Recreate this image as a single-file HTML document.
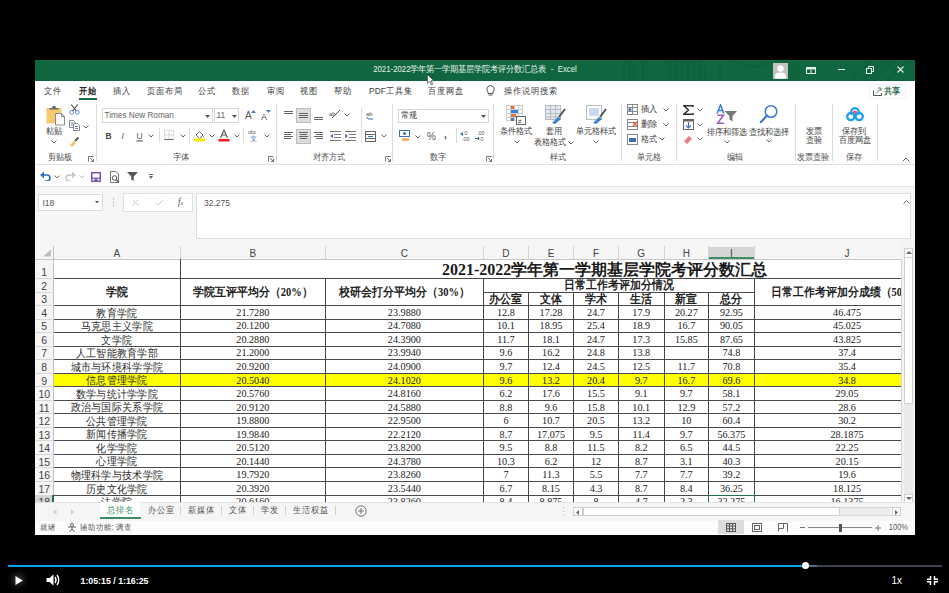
<!DOCTYPE html><html><head><meta charset="utf-8"><style>
html,body{margin:0;padding:0;}
body{width:949px;height:593px;background:#000;position:relative;overflow:hidden;font-family:"Liberation Sans",sans-serif;}
.t{transform:scaleY(1.1);transform-origin:50% 50%;}
</style></head><body>
<div style="position:absolute;left:35px;top:60px;width:880px;height:475px;background:#fff;"></div>
<div style="position:absolute;left:35px;top:60px;width:880px;height:21px;background:#10663f;"></div>
<svg style="position:absolute;left:610px;top:60px;" width="305" height="21" viewBox="0 0 305 21"><g opacity="0.35" fill="none" stroke="#0c5a33" stroke-width="2"><path d="M14 0 V21 M19 0 V21 M24 4 V21 M33 0 V21 M60 0 V21 M66 0 V21 M72 0 V21 M78 2 V21 M84 0 V21 M90 0 V21 M95 5 V21 M110 0 V21"/><circle cx="182" cy="12" r="7"/><circle cx="182" cy="12" r="3"/><path d="M125 0 Q140 12 160 2" /><path d="M240 21 L262 0 M252 21 L274 0 M264 21 L286 0 M276 21 L298 0"/></g></svg>
<div class="t" style="position:absolute;left:35px;top:65.5px;width:880px;text-align:center;font:7.8px/7.8px 'Liberation Sans', sans-serif;color:#e8f0ea;white-space:nowrap;">2021-2022学年第一学期基层学院考评分数汇总表&nbsp; -&nbsp; Excel</div>
<div class="t" style="position:absolute;left:44px;top:86.5px;font:8.5px/8.5px 'Liberation Sans', sans-serif;color:#444;white-space:nowrap;">文件</div>
<div class="t" style="position:absolute;left:79px;top:86.5px;font:8.5px/8.5px 'Liberation Sans', sans-serif;color:#222;white-space:nowrap;font-weight:bold;">开始</div>
<div class="t" style="position:absolute;left:113px;top:86.5px;font:8.5px/8.5px 'Liberation Sans', sans-serif;color:#444;white-space:nowrap;">插入</div>
<div class="t" style="position:absolute;left:147px;top:86.5px;font:8.5px/8.5px 'Liberation Sans', sans-serif;color:#444;white-space:nowrap;">页面布局</div>
<div class="t" style="position:absolute;left:197.5px;top:86.5px;font:8.5px/8.5px 'Liberation Sans', sans-serif;color:#444;white-space:nowrap;">公式</div>
<div class="t" style="position:absolute;left:232px;top:86.5px;font:8.5px/8.5px 'Liberation Sans', sans-serif;color:#444;white-space:nowrap;">数据</div>
<div class="t" style="position:absolute;left:266.5px;top:86.5px;font:8.5px/8.5px 'Liberation Sans', sans-serif;color:#444;white-space:nowrap;">审阅</div>
<div class="t" style="position:absolute;left:300px;top:86.5px;font:8.5px/8.5px 'Liberation Sans', sans-serif;color:#444;white-space:nowrap;">视图</div>
<div class="t" style="position:absolute;left:334px;top:86.5px;font:8.5px/8.5px 'Liberation Sans', sans-serif;color:#444;white-space:nowrap;">帮助</div>
<div class="t" style="position:absolute;left:369px;top:86.5px;font:8.5px/8.5px 'Liberation Sans', sans-serif;color:#444;white-space:nowrap;">PDF工具集</div>
<div class="t" style="position:absolute;left:428px;top:86.5px;font:8.5px/8.5px 'Liberation Sans', sans-serif;color:#444;white-space:nowrap;">百度网盘</div>
<div class="t" style="position:absolute;left:504px;top:86.5px;font:8.5px/8.5px 'Liberation Sans', sans-serif;color:#444;white-space:nowrap;">操作说明搜索</div>
<div style="position:absolute;left:79px;top:97.5px;width:17.5px;height:2px;background:#1d6b45;"></div>
<div style="position:absolute;left:35px;top:164px;width:880px;height:1px;background:#e1e1e1;"></div>
<div style="position:absolute;left:35px;top:187px;width:880px;height:59px;background:#f6f6f6;"></div>
<div style="position:absolute;left:35px;top:186px;width:880px;height:1px;background:#e6e6e6;"></div>
<svg style="position:absolute;left:45.5px;top:105px;" width="20" height="21" viewBox="0 0 20 21"><rect x="0.5" y="3" width="15" height="15.5" fill="#f7c96e"/><path d="M3.5 4.5 V3 H6 Q6 0.8 8 0.8 Q10 0.8 10 3 H12.5 V4.5 Z" fill="#6b6b6b"/><path d="M9.5 8.5 H15.5 L18.5 11.5 V20 H9.5 Z" fill="#fff" stroke="#8a8a8a" stroke-width="1"/><path d="M15.5 8.5 V11.5 H18.5" fill="none" stroke="#8a8a8a" stroke-width="1"/></svg>
<div class="t" style="position:absolute;left:46px;top:128px;font:8px/8px 'Liberation Sans', sans-serif;color:#444;white-space:nowrap;">粘贴</div>
<svg style="position:absolute;left:51px;top:140px;" width="6" height="4" viewBox="0 0 6 4"><path d="M0.5 0.5 L3 3 L5.5 0.5" fill="none" stroke="#666" stroke-width="1"/></svg>
<svg style="position:absolute;left:69px;top:104px;" width="11" height="11" viewBox="0 0 11 11"><circle cx="2.7" cy="8.3" r="1.9" fill="none" stroke="#5a86c8" stroke-width="1"/><circle cx="8.3" cy="8.3" r="1.9" fill="none" stroke="#5a86c8" stroke-width="1"/><path d="M3.8 6.6 L8.8 0.5 M7.2 6.6 L2.2 0.5" stroke="#555" stroke-width="1.1"/></svg>
<svg style="position:absolute;left:69px;top:120px;" width="11" height="11" viewBox="0 0 11 11"><path d="M0.5 0.5 H4.5 L6 2 V7.5 H0.5 Z" fill="#fff" stroke="#8a8a8a"/><path d="M4.5 3.5 H8.5 L10.5 5.5 V10.5 H4.5 Z" fill="#fff" stroke="#8a8a8a"/><path d="M2 3 H4 M2 5 H4 M6 6.5 H9 M6 8.5 H9" stroke="#5b8fd0"/></svg>
<svg style="position:absolute;left:83px;top:125px;" width="6" height="4" viewBox="0 0 6 4"><path d="M0.5 0.5 L3 3 L5.5 0.5" fill="none" stroke="#666" stroke-width="1"/></svg>
<svg style="position:absolute;left:69px;top:136px;" width="11" height="11" viewBox="0 0 11 11"><path d="M1 9 L5 5 L7 7 L3 11 Z" fill="#f2c26b"/><path d="M6 5 L9.5 1.5" stroke="#555" stroke-width="2"/></svg>
<div class="t" style="position:absolute;left:48px;top:154px;font:8px/8px 'Liberation Sans', sans-serif;color:#505050;white-space:nowrap;">剪贴板</div>
<svg style="position:absolute;left:88px;top:155.5px;" width="6" height="6" viewBox="0 0 6 6"><path d="M0.5 5.5 V0.5 H5.5" fill="none" stroke="#777" stroke-width="1"/><path d="M2 2 L5.5 5.5 M5.5 3 V5.5 H3" fill="none" stroke="#777" stroke-width="1"/></svg>
<div style="position:absolute;left:96.4px;top:104px;width:1px;height:57px;background:#dcdcdc;"></div>
<div style="position:absolute;left:102px;top:108.2px;width:110.5px;height:14.8px;border:1px solid #d6d6d6;box-sizing:border-box;background:#fff;"></div>
<div class="t" style="position:absolute;left:104.5px;top:111px;font:8.2px/9px 'Liberation Sans', sans-serif;color:#666;white-space:nowrap;">Times New Roman</div>
<svg style="position:absolute;left:205px;top:114.5px;" width="5" height="3" viewBox="0 0 5 3"><path d="M0 0 L5 0 L2.5 3 Z" fill="#555"/></svg>
<div style="position:absolute;left:214.3px;top:108.2px;width:25px;height:14.8px;border:1px solid #d6d6d6;box-sizing:border-box;background:#fff;"></div>
<div class="t" style="position:absolute;left:216.5px;top:111px;font:8.5px/9px 'Liberation Sans', sans-serif;color:#666;white-space:nowrap;">11</div>
<svg style="position:absolute;left:232px;top:114.5px;" width="5" height="3" viewBox="0 0 5 3"><path d="M0 0 L5 0 L2.5 3 Z" fill="#555"/></svg>
<div class="t" style="position:absolute;left:245px;top:111px;font:10px/10px 'Liberation Sans', sans-serif;color:#555;white-space:nowrap;">A</div>
<svg style="position:absolute;left:250.5px;top:110px;" width="5" height="3" viewBox="0 0 5 3"><path d="M0 3 L2.5 0 L5 3 Z" fill="#4a7fc1"/></svg>
<div class="t" style="position:absolute;left:261px;top:112px;font:9px/10px 'Liberation Sans', sans-serif;color:#555;white-space:nowrap;">A</div>
<svg style="position:absolute;left:266px;top:110px;" width="5" height="3" viewBox="0 0 5 3"><path d="M0 0 L5 0 L2.5 3 Z" fill="#4a7fc1"/></svg>
<div class="t" style="position:absolute;left:105.5px;top:131.5px;font:8.5px/9px 'Liberation Sans', sans-serif;color:#444;white-space:nowrap;"><b>B</b></div>
<div class="t" style="position:absolute;left:121.5px;top:131.5px;font:8.5px/9px 'Liberation Sans', sans-serif;color:#555;white-space:nowrap;"><i>I</i></div>
<div class="t" style="position:absolute;left:136.5px;top:131.5px;font:8.5px/9px 'Liberation Sans', sans-serif;color:#555;white-space:nowrap;"><u>U</u></div>
<svg style="position:absolute;left:148px;top:134px;" width="6" height="4" viewBox="0 0 6 4"><path d="M0.5 0.5 L3 3 L5.5 0.5" fill="none" stroke="#666" stroke-width="1"/></svg>
<div style="position:absolute;left:158.5px;top:128px;width:1px;height:15px;background:#dcdcdc;"></div>
<svg style="position:absolute;left:164px;top:130px;" width="11" height="10" viewBox="0 0 11 10"><rect x="0.5" y="0.5" width="9" height="9" fill="none" stroke="#bbb" stroke-dasharray="1 1"/><path d="M5 0.5 V9.5 M0.5 5 H9.5" stroke="#bbb" stroke-dasharray="1 1"/><path d="M0.5 9.5 H9.5" stroke="#666"/></svg>
<svg style="position:absolute;left:180px;top:134px;" width="6" height="4" viewBox="0 0 6 4"><path d="M0.5 0.5 L3 3 L5.5 0.5" fill="none" stroke="#666" stroke-width="1"/></svg>
<div style="position:absolute;left:188.5px;top:128px;width:1px;height:15px;background:#dcdcdc;"></div>
<svg style="position:absolute;left:193px;top:129px;" width="13" height="13" viewBox="0 0 13 13"><path d="M3 6 L6.5 2.5 L10 6 L6.5 9.5 Z" fill="#fff" stroke="#666"/><path d="M10 6 Q11.5 8 10.5 9" fill="#3a6fb8"/><rect x="1" y="9.5" width="11" height="3" fill="#f5f000"/></svg>
<svg style="position:absolute;left:209px;top:134px;" width="6" height="4" viewBox="0 0 6 4"><path d="M0.5 0.5 L3 3 L5.5 0.5" fill="none" stroke="#666" stroke-width="1"/></svg>
<svg style="position:absolute;left:218px;top:129px;" width="12" height="13" viewBox="0 0 12 13"><path d="M2.5 9 L6 1 L9.5 9 M4 6 H8" fill="none" stroke="#555" stroke-width="1.1"/><rect x="0.5" y="10" width="11" height="2.5" fill="#e81c1c"/></svg>
<svg style="position:absolute;left:234px;top:134px;" width="6" height="4" viewBox="0 0 6 4"><path d="M0.5 0.5 L3 3 L5.5 0.5" fill="none" stroke="#666" stroke-width="1"/></svg>
<div style="position:absolute;left:243px;top:128px;width:1px;height:15px;background:#dcdcdc;"></div>
<svg style="position:absolute;left:248px;top:129px;" width="12" height="13" viewBox="0 0 12 13"><text x="0" y="5" font-size="5" fill="#555" font-family="Liberation Sans">ubc</text><text x="2" y="12" font-size="7" fill="#3a6fb8" font-family="Liberation Sans">文</text></svg>
<svg style="position:absolute;left:264px;top:134px;" width="6" height="4" viewBox="0 0 6 4"><path d="M0.5 0.5 L3 3 L5.5 0.5" fill="none" stroke="#666" stroke-width="1"/></svg>
<div class="t" style="position:absolute;left:173px;top:154px;font:8px/8px 'Liberation Sans', sans-serif;color:#505050;white-space:nowrap;">字体</div>
<svg style="position:absolute;left:267.5px;top:155.5px;" width="6" height="6" viewBox="0 0 6 6"><path d="M0.5 5.5 V0.5 H5.5" fill="none" stroke="#777" stroke-width="1"/><path d="M2 2 L5.5 5.5 M5.5 3 V5.5 H3" fill="none" stroke="#777" stroke-width="1"/></svg>
<div style="position:absolute;left:275.5px;top:104px;width:1px;height:57px;background:#dcdcdc;"></div>
<svg style="position:absolute;left:284px;top:111px;" width="12" height="5" viewBox="0 0 12 5"><rect x="0" y="0" width="9" height="1" fill="#666"/><rect x="0" y="2" width="9" height="1" fill="#666"/></svg>
<div style="position:absolute;left:296.2px;top:108.2px;width:14.5px;height:14.8px;background:#dcdcdc;border:1px solid #bdbdbd;box-sizing:border-box;"></div>
<svg style="position:absolute;left:299px;top:113px;" width="12" height="7" viewBox="0 0 12 7"><rect x="0" y="0" width="9" height="1" fill="#666"/><rect x="0" y="2" width="9" height="1" fill="#666"/><rect x="0" y="4" width="9" height="1" fill="#666"/></svg>
<svg style="position:absolute;left:314px;top:117px;" width="12" height="5" viewBox="0 0 12 5"><rect x="0" y="0" width="9" height="1" fill="#666"/><rect x="0" y="2" width="9" height="1" fill="#666"/></svg>
<svg style="position:absolute;left:329px;top:109px;" width="12" height="10" viewBox="0 0 12 10"><text x="0" y="7" font-size="6" fill="#555" font-family="Liberation Sans">ab</text><path d="M3 9 L11 1" stroke="#555"/></svg>
<svg style="position:absolute;left:344px;top:113px;" width="6" height="4" viewBox="0 0 6 4"><path d="M0.5 0.5 L3 3 L5.5 0.5" fill="none" stroke="#666" stroke-width="1"/></svg>
<div style="position:absolute;left:360.7px;top:108px;width:1px;height:35px;background:#dcdcdc;"></div>
<svg style="position:absolute;left:366px;top:109px;" width="9" height="11" viewBox="0 0 9 11"><text x="0" y="7" font-size="6" fill="#555" font-family="Liberation Sans">ab</text><path d="M1 8 Q1 10 3 10 H7" fill="none" stroke="#3a6fb8"/></svg>
<svg style="position:absolute;left:284px;top:132px;" width="12" height="9" viewBox="0 0 12 9"><rect x="0" y="0" width="9" height="1" fill="#666"/><rect x="0" y="2" width="7" height="1" fill="#666"/><rect x="0" y="4" width="9" height="1" fill="#666"/><rect x="0" y="6" width="7" height="1" fill="#666"/></svg>
<div style="position:absolute;left:296.2px;top:129px;width:14.5px;height:14.6px;background:#dcdcdc;border:1px solid #bdbdbd;box-sizing:border-box;"></div>
<svg style="position:absolute;left:299px;top:132px;" width="12" height="9" viewBox="0 0 12 9"><rect x="0" y="0" width="9" height="1" fill="#666"/><rect x="1" y="2" width="7" height="1" fill="#666"/><rect x="0" y="4" width="9" height="1" fill="#666"/><rect x="1" y="6" width="7" height="1" fill="#666"/></svg>
<svg style="position:absolute;left:314px;top:132px;" width="12" height="9" viewBox="0 0 12 9"><rect x="0" y="0" width="9" height="1" fill="#666"/><rect x="2" y="2" width="7" height="1" fill="#666"/><rect x="0" y="4" width="9" height="1" fill="#666"/><rect x="2" y="6" width="7" height="1" fill="#666"/></svg>
<svg style="position:absolute;left:330px;top:131px;" width="11" height="10" viewBox="0 0 11 10"><path d="M0 0.5 H11 M4 3.5 H11 M4 6.5 H11 M0 9.5 H11" stroke="#777"/><path d="M0 5 L3 3 V7 Z" fill="#3a6fb8"/></svg>
<svg style="position:absolute;left:345px;top:131px;" width="11" height="10" viewBox="0 0 11 10"><path d="M0 0.5 H11 M4 3.5 H11 M4 6.5 H11 M0 9.5 H11" stroke="#777"/><path d="M3 5 L0 3 V7 Z" fill="#3a6fb8"/></svg>
<svg style="position:absolute;left:365px;top:131px;" width="11" height="11" viewBox="0 0 11 11"><rect x="0.5" y="0.5" width="10" height="10" fill="none" stroke="#666"/><path d="M0.5 3.5 H10.5 M0.5 7.5 H10.5" stroke="#666"/><path d="M3 5.5 H8" stroke="#3a6fb8"/></svg>
<svg style="position:absolute;left:381px;top:134px;" width="6" height="4" viewBox="0 0 6 4"><path d="M0.5 0.5 L3 3 L5.5 0.5" fill="none" stroke="#666" stroke-width="1"/></svg>
<div class="t" style="position:absolute;left:313px;top:154px;font:8px/8px 'Liberation Sans', sans-serif;color:#505050;white-space:nowrap;">对齐方式</div>
<svg style="position:absolute;left:384.5px;top:155.5px;" width="6" height="6" viewBox="0 0 6 6"><path d="M0.5 5.5 V0.5 H5.5" fill="none" stroke="#777" stroke-width="1"/><path d="M2 2 L5.5 5.5 M5.5 3 V5.5 H3" fill="none" stroke="#777" stroke-width="1"/></svg>
<div style="position:absolute;left:392px;top:104px;width:1px;height:57px;background:#dcdcdc;"></div>
<div style="position:absolute;left:398.2px;top:108.5px;width:90.4px;height:14.5px;border:1px solid #d6d6d6;box-sizing:border-box;background:#fff;"></div>
<div class="t" style="position:absolute;left:401px;top:111px;font:8.2px/9px 'Liberation Sans', sans-serif;color:#444;white-space:nowrap;">常规</div>
<svg style="position:absolute;left:481px;top:114.5px;" width="5" height="3" viewBox="0 0 5 3"><path d="M0 0 L5 0 L2.5 3 Z" fill="#555"/></svg>
<svg style="position:absolute;left:399px;top:130px;" width="12" height="12" viewBox="0 0 12 12"><rect x="0.5" y="0.5" width="10" height="6" fill="#fff" stroke="#3a6fb8"/><circle cx="5.5" cy="3.5" r="1.5" fill="#3a6fb8"/><rect x="3" y="8" width="7" height="3" fill="#f2b36b"/></svg>
<svg style="position:absolute;left:415px;top:135px;" width="6" height="4" viewBox="0 0 6 4"><path d="M0.5 0.5 L3 3 L5.5 0.5" fill="none" stroke="#666" stroke-width="1"/></svg>
<div class="t" style="position:absolute;left:427px;top:130.5px;font:10px/11px 'Liberation Sans', sans-serif;color:#555;white-space:nowrap;">%</div>
<div class="t" style="position:absolute;left:444px;top:129px;font:10px/11px 'Liberation Sans', sans-serif;color:#555;white-space:nowrap;font-weight:bold;">,</div>
<div style="position:absolute;left:456px;top:128px;width:1px;height:15px;background:#dcdcdc;"></div>
<svg style="position:absolute;left:460px;top:130px;" width="11" height="12" viewBox="0 0 11 12"><text x="3" y="5" font-size="5.5" fill="#555" font-family="Liberation Sans">.0</text><text x="2" y="11" font-size="5.5" fill="#555" font-family="Liberation Sans">.00</text><path d="M0 4 L3 2 V6 Z" fill="#3a6fb8"/></svg>
<svg style="position:absolute;left:475px;top:130px;" width="11" height="12" viewBox="0 0 11 12"><text x="2" y="5" font-size="5.5" fill="#555" font-family="Liberation Sans">.00</text><text x="4" y="11" font-size="5.5" fill="#555" font-family="Liberation Sans">.0</text><path d="M0 8.5 H3 M3 7 L4 8.5 L3 10" stroke="#3a6fb8"/></svg>
<div class="t" style="position:absolute;left:430px;top:154px;font:8px/8px 'Liberation Sans', sans-serif;color:#505050;white-space:nowrap;">数字</div>
<svg style="position:absolute;left:485.5px;top:155.5px;" width="6" height="6" viewBox="0 0 6 6"><path d="M0.5 5.5 V0.5 H5.5" fill="none" stroke="#777" stroke-width="1"/><path d="M2 2 L5.5 5.5 M5.5 3 V5.5 H3" fill="none" stroke="#777" stroke-width="1"/></svg>
<div style="position:absolute;left:493px;top:104px;width:1px;height:57px;background:#dcdcdc;"></div>
<svg style="position:absolute;left:506px;top:105px;" width="21" height="20" viewBox="0 0 21 20"><g stroke="#ccc" fill="none"><rect x="0.5" y="0.5" width="16" height="15" fill="#fff"/><path d="M4.5 0.5 V15.5 M8.5 0.5 V15.5 M12.5 0.5 V15.5 M0.5 4.5 H16.5 M0.5 8.5 H16.5 M0.5 12.5 H16.5"/></g><rect x="5" y="1" width="3" height="3" fill="#e8703a"/><rect x="5" y="5" width="7" height="3" fill="#3a7fd0"/><rect x="5" y="9" width="5" height="3" fill="#e8703a"/><rect x="5" y="13" width="3" height="3" fill="#3a7fd0"/><rect x="10.5" y="11.5" width="9" height="8" fill="#fff" stroke="#666"/><text x="12" y="18.5" font-size="7" fill="#333" font-family="Liberation Sans">≠</text></svg>
<div class="t" style="position:absolute;left:500px;top:128px;font:8px/8px 'Liberation Sans', sans-serif;color:#444;white-space:nowrap;">条件格式</div>
<svg style="position:absolute;left:514px;top:140px;" width="6" height="4" viewBox="0 0 6 4"><path d="M0.5 0.5 L3 3 L5.5 0.5" fill="none" stroke="#666" stroke-width="1"/></svg>
<svg style="position:absolute;left:545px;top:105px;" width="21" height="20" viewBox="0 0 21 20"><g stroke="#bbb" fill="none"><rect x="0.5" y="0.5" width="15" height="14" fill="#dfe8f5"/><path d="M0.5 4.5 H15.5 M0.5 8.5 H15.5 M0.5 12 H15.5 M5.5 0.5 V14.5 M10.5 0.5 V14.5"/></g><path d="M7 18 L13 12 L16 14 L10 19 Z" fill="#3a7fd0"/><path d="M14 12 L20 4" stroke="#555" stroke-width="2"/></svg>
<div class="t" style="position:absolute;left:546px;top:128px;font:8px/8px 'Liberation Sans', sans-serif;color:#444;white-space:nowrap;">套用</div>
<div class="t" style="position:absolute;left:534px;top:139px;font:8px/8px 'Liberation Sans', sans-serif;color:#444;white-space:nowrap;">表格格式</div>
<svg style="position:absolute;left:568px;top:141px;" width="6" height="4" viewBox="0 0 6 4"><path d="M0.5 0.5 L3 3 L5.5 0.5" fill="none" stroke="#666" stroke-width="1"/></svg>
<svg style="position:absolute;left:586px;top:105px;" width="21" height="20" viewBox="0 0 21 20"><rect x="0.5" y="0.5" width="15" height="14" fill="#fff" stroke="#bbb"/><rect x="3" y="3" width="10" height="8" fill="#c9dbf2"/><path d="M7 18 L13 12 L16 14 L10 19 Z" fill="#3a7fd0"/><path d="M14 12 L20 4" stroke="#555" stroke-width="2"/></svg>
<div class="t" style="position:absolute;left:576px;top:128px;font:8px/8px 'Liberation Sans', sans-serif;color:#444;white-space:nowrap;">单元格样式</div>
<svg style="position:absolute;left:593px;top:140px;" width="6" height="4" viewBox="0 0 6 4"><path d="M0.5 0.5 L3 3 L5.5 0.5" fill="none" stroke="#666" stroke-width="1"/></svg>
<div class="t" style="position:absolute;left:550px;top:154px;font:8px/8px 'Liberation Sans', sans-serif;color:#505050;white-space:nowrap;">样式</div>
<div style="position:absolute;left:621px;top:104px;width:1px;height:57px;background:#dcdcdc;"></div>
<svg style="position:absolute;left:627px;top:104px;" width="11" height="11" viewBox="0 0 11 11"><rect x="0.5" y="0.5" width="10" height="10" fill="#fff" stroke="#888"/><path d="M0.5 3.5 H10.5 M0.5 7.5 H10.5 M5.5 0.5 V10.5" stroke="#888"/><circle cx="3" cy="5.5" r="1.5" fill="#3a6fb8"/></svg>
<div class="t" style="position:absolute;left:641px;top:106px;font:8px/8px 'Liberation Sans', sans-serif;color:#444;white-space:nowrap;">插入</div>
<svg style="position:absolute;left:663px;top:108px;" width="6" height="4" viewBox="0 0 6 4"><path d="M0.5 0.5 L3 3 L5.5 0.5" fill="none" stroke="#666" stroke-width="1"/></svg>
<svg style="position:absolute;left:627px;top:119px;" width="11" height="11" viewBox="0 0 11 11"><rect x="0.5" y="0.5" width="10" height="10" fill="#fff" stroke="#888"/><path d="M0.5 3.5 H10.5 M0.5 7.5 H10.5" stroke="#888"/><path d="M6 3 L10 7 M10 3 L6 7" stroke="#e8533a" stroke-width="1.2"/></svg>
<div class="t" style="position:absolute;left:641px;top:121px;font:8px/8px 'Liberation Sans', sans-serif;color:#444;white-space:nowrap;">删除</div>
<svg style="position:absolute;left:663px;top:123px;" width="6" height="4" viewBox="0 0 6 4"><path d="M0.5 0.5 L3 3 L5.5 0.5" fill="none" stroke="#666" stroke-width="1"/></svg>
<svg style="position:absolute;left:627px;top:134px;" width="11" height="11" viewBox="0 0 11 11"><rect x="0.5" y="0.5" width="10" height="10" fill="#fff" stroke="#888"/><rect x="2" y="4" width="7" height="4" fill="#3a6fb8"/></svg>
<div class="t" style="position:absolute;left:641px;top:135.5px;font:8px/8px 'Liberation Sans', sans-serif;color:#444;white-space:nowrap;">格式</div>
<svg style="position:absolute;left:659px;top:137px;" width="6" height="4" viewBox="0 0 6 4"><path d="M0.5 0.5 L3 3 L5.5 0.5" fill="none" stroke="#666" stroke-width="1"/></svg>
<div class="t" style="position:absolute;left:637px;top:154px;font:8px/8px 'Liberation Sans', sans-serif;color:#505050;white-space:nowrap;">单元格</div>
<div style="position:absolute;left:676px;top:104px;width:1px;height:57px;background:#dcdcdc;"></div>
<svg style="position:absolute;left:683px;top:105px;" width="11" height="10" viewBox="0 0 11 10"><path d="M10 2 V0.8 H1 L5.5 5 L1 9.2 H10 V8" fill="none" stroke="#333" stroke-width="1.5" stroke-linejoin="miter"/></svg>
<svg style="position:absolute;left:697px;top:108px;" width="6" height="4" viewBox="0 0 6 4"><path d="M0.5 0.5 L3 3 L5.5 0.5" fill="none" stroke="#666" stroke-width="1"/></svg>
<svg style="position:absolute;left:683px;top:119px;" width="11" height="11" viewBox="0 0 11 11"><rect x="0.5" y="0.5" width="10" height="10" fill="#fff" stroke="#666"/><rect x="0.5" y="0.5" width="10" height="2" fill="#666"/><path d="M5.5 3 V9 M3 6.5 L5.5 9 L8 6.5" fill="none" stroke="#3a6fb8" stroke-width="1.1"/></svg>
<svg style="position:absolute;left:697px;top:123px;" width="6" height="4" viewBox="0 0 6 4"><path d="M0.5 0.5 L3 3 L5.5 0.5" fill="none" stroke="#666" stroke-width="1"/></svg>
<svg style="position:absolute;left:683px;top:134px;" width="11" height="10" viewBox="0 0 11 10"><path d="M1 7 L6 2 L9 5 L4 10 Z" fill="#f07c8c"/></svg>
<svg style="position:absolute;left:697px;top:137px;" width="6" height="4" viewBox="0 0 6 4"><path d="M0.5 0.5 L3 3 L5.5 0.5" fill="none" stroke="#666" stroke-width="1"/></svg>
<svg style="position:absolute;left:716px;top:104px;" width="22" height="21" viewBox="0 0 22 21"><path d="M1.2 9.5 L4.5 0.8 L7.8 9.5 M2.5 6.5 H6.5" fill="none" stroke="#3a7fd0" stroke-width="1.5"/><path d="M1.5 11.2 H7.5 L1.5 19.3 H8" fill="none" stroke="#9a5ac8" stroke-width="1.5"/><path d="M8.5 7 H21 L16.5 12 V17.5 L13.5 15.5 V12 Z" fill="#777"/></svg>
<div class="t" style="position:absolute;left:707px;top:128.5px;font:8px/8px 'Liberation Sans', sans-serif;color:#444;white-space:nowrap;">排序和筛选</div>
<svg style="position:absolute;left:724px;top:140px;" width="6" height="4" viewBox="0 0 6 4"><path d="M0.5 0.5 L3 3 L5.5 0.5" fill="none" stroke="#666" stroke-width="1"/></svg>
<svg style="position:absolute;left:759px;top:104px;" width="20" height="20" viewBox="0 0 20 20"><circle cx="12" cy="7.5" r="5.8" fill="none" stroke="#3b7dd0" stroke-width="1.5"/><path d="M8 11.5 L1.8 18.2" stroke="#3b7dd0" stroke-width="2.2" stroke-linecap="round"/></svg>
<div class="t" style="position:absolute;left:749px;top:129px;font:8px/8px 'Liberation Sans', sans-serif;color:#444;white-space:nowrap;">查找和选择</div>
<svg style="position:absolute;left:766px;top:139px;" width="6" height="4" viewBox="0 0 6 4"><path d="M0.5 0.5 L3 3 L5.5 0.5" fill="none" stroke="#666" stroke-width="1"/></svg>
<div class="t" style="position:absolute;left:727px;top:154px;font:8px/8px 'Liberation Sans', sans-serif;color:#505050;white-space:nowrap;">编辑</div>
<div style="position:absolute;left:794.8px;top:104px;width:1px;height:57px;background:#dcdcdc;"></div>
<div class="t" style="position:absolute;left:806px;top:128px;font:8px/8px 'Liberation Sans', sans-serif;color:#444;white-space:nowrap;">发票</div>
<div class="t" style="position:absolute;left:806px;top:137.2px;font:8px/8px 'Liberation Sans', sans-serif;color:#444;white-space:nowrap;">查验</div>
<div class="t" style="position:absolute;left:797px;top:154px;font:8px/8px 'Liberation Sans', sans-serif;color:#505050;white-space:nowrap;">发票查验</div>
<div style="position:absolute;left:831.7px;top:104px;width:1px;height:57px;background:#dcdcdc;"></div>
<svg style="position:absolute;left:845.5px;top:107px;" width="18" height="15" viewBox="0 0 18 15"><path d="M9 3.5 Q11.5 3.5 11.5 6.5 L9 9.5 L6.5 6.5 Q6.5 3.5 9 3.5 Z" fill="#f05a6e"/><g fill="none" stroke="#1e9ff0" stroke-width="2.3"><path d="M6.2 7.5 A3.8 3.8 0 1 1 11.8 7.5"/><circle cx="4.8" cy="9.6" r="3.6"/><circle cx="13.2" cy="9.6" r="3.6"/></g></svg>
<div class="t" style="position:absolute;left:842px;top:128px;font:8px/8px 'Liberation Sans', sans-serif;color:#444;white-space:nowrap;">保存到</div>
<div class="t" style="position:absolute;left:839px;top:137.2px;font:8px/8px 'Liberation Sans', sans-serif;color:#444;white-space:nowrap;">百度网盘</div>
<div class="t" style="position:absolute;left:846px;top:154px;font:8px/8px 'Liberation Sans', sans-serif;color:#505050;white-space:nowrap;">保存</div>
<div style="position:absolute;left:876.5px;top:104px;width:1px;height:57px;background:#dcdcdc;"></div>
<svg style="position:absolute;left:902px;top:157px;" width="8" height="5" viewBox="0 0 8 5"><path d="M0.5 4.5 L4 1 L7.5 4.5" fill="none" stroke="#666" stroke-width="1"/></svg>
<div style="position:absolute;left:869px;top:84px;width:37px;height:15px;border:1px solid #f2f2f2;box-sizing:border-box;"></div>
<svg style="position:absolute;left:872.5px;top:87px;" width="9" height="9" viewBox="0 0 9 9"><path d="M0.5 3.5 V8.5 H8.5 V6" fill="none" stroke="#555"/><path d="M3 6.5 L7.5 2 M5 1 H8 V4" fill="none" stroke="#4b7f62"/></svg>
<div class="t" style="position:absolute;left:883.5px;top:86.5px;font:8px/9px 'Liberation Sans', sans-serif;color:#2a6b48;white-space:nowrap;font-weight:bold;">共享</div>
<svg style="position:absolute;left:486px;top:85px;" width="9" height="11" viewBox="0 0 9 11"><path d="M4.5 0.5 A3.8 3.8 0 0 1 7 7 V8.5 H2 V7 A3.8 3.8 0 0 1 4.5 0.5 Z" fill="none" stroke="#555"/><path d="M2.5 10 H6.5" stroke="#555"/></svg>
<div style="position:absolute;left:773.3px;top:63px;width:15px;height:15.5px;background:#c2c2c2;"></div>
<svg style="position:absolute;left:773.3px;top:63px;" width="15" height="16" viewBox="0 0 15 16"><circle cx="7.5" cy="5.5" r="3.2" fill="#fff"/><path d="M2 15.5 V13.5 Q2 10 5.5 9.5 H9.5 Q13 10 13 13.5 V15.5 Z" fill="#fff"/></svg>
<svg style="position:absolute;left:806px;top:66.5px;" width="10" height="7" viewBox="0 0 10 7"><rect x="0.5" y="0.5" width="9" height="6" fill="none" stroke="#e6eee8"/><rect x="0.5" y="0.5" width="9" height="2" fill="#e6eee8"/><path d="M5 3 V6" stroke="#e6eee8"/></svg>
<div style="position:absolute;left:837.5px;top:68.8px;width:7px;height:1px;background:#e6eee8;"></div>
<svg style="position:absolute;left:866px;top:66px;" width="8" height="8" viewBox="0 0 8 8"><rect x="0.5" y="2.5" width="5" height="5" fill="none" stroke="#e6eee8"/><path d="M2.5 2.5 V0.5 H7.5 V5.5 H5.5" fill="none" stroke="#e6eee8"/></svg>
<svg style="position:absolute;left:896.5px;top:66px;" width="7" height="7" viewBox="0 0 7 7"><path d="M0.5 0.5 L6.5 6.5 M6.5 0.5 L0.5 6.5" stroke="#e6eee8" stroke-width="1.1"/></svg>
<svg style="position:absolute;left:427px;top:73.5px;" width="9" height="15" viewBox="0 0 9 15"><g transform="scale(0.78)"><path d="M0.5 0.5 V12 L3.5 9.5 L5.5 14 L7.2 13.2 L5.3 8.8 L9 8.8 Z" fill="#fff" stroke="#222" stroke-width="0.8"/></g></svg>
<svg style="position:absolute;left:40px;top:171px;" width="11" height="10" viewBox="0 0 11 10"><path d="M2 4 H7 A3 3 0 0 1 7 10 H5" fill="none" stroke="#2f6fc0" stroke-width="1.6"/><path d="M0 4 L4 0.5 V7.5 Z" fill="#2f6fc0"/></svg>
<svg style="position:absolute;left:54px;top:175px;" width="6" height="4" viewBox="0 0 6 4"><path d="M0.5 0.5 L3 3 L5.5 0.5" fill="none" stroke="#777" stroke-width="1"/></svg>
<svg style="position:absolute;left:65px;top:171px;" width="11" height="10" viewBox="0 0 11 10"><path d="M9 4 H4 A3 3 0 0 0 4 10 H6" fill="none" stroke="#c6c6c6" stroke-width="1.4"/><path d="M11 4 L7 0.5 V7.5 Z" fill="#c6c6c6"/></svg>
<svg style="position:absolute;left:79px;top:175px;" width="6" height="4" viewBox="0 0 6 4"><path d="M0.5 0.5 L3 3 L5.5 0.5" fill="none" stroke="#bbb" stroke-width="1"/></svg>
<svg style="position:absolute;left:91px;top:172px;" width="10" height="10" viewBox="0 0 10 10"><rect x="0.75" y="0.75" width="8.5" height="8.5" fill="none" stroke="#7b52b3" stroke-width="1.5"/><path d="M1 6.2 H9" stroke="#7b52b3" stroke-width="1.2"/><rect x="3.5" y="6.5" width="3" height="2.5" fill="#7b52b3"/></svg>
<svg style="position:absolute;left:110px;top:171px;" width="10" height="12" viewBox="0 0 10 12"><path d="M0.5 0.5 H6 L8.5 3 V11.5 H0.5 Z" fill="#fff" stroke="#777"/><circle cx="4.5" cy="7" r="2.3" fill="none" stroke="#555"/><path d="M6 8.5 L9 11.5" stroke="#555" stroke-width="1.2"/></svg>
<svg style="position:absolute;left:127px;top:172px;" width="11" height="9" viewBox="0 0 11 9"><path d="M0 0 H11 L6.8 4.5 V9 L4.2 7.5 V4.5 Z" fill="#5a5a5a"/></svg>
<svg style="position:absolute;left:149px;top:174px;" width="4" height="6" viewBox="0 0 4 6"><path d="M0 0.5 H4" stroke="#666"/><path d="M0 2 L4 2 L2 5 Z" fill="#666"/></svg>
<div style="position:absolute;left:38.4px;top:193.5px;width:65px;height:17.5px;background:#fff;border:1px solid #dcdcdc;box-sizing:border-box;"></div>
<div class="t" style="position:absolute;left:42.5px;top:198.5px;font:8.5px/9px 'Liberation Sans', sans-serif;color:#555;white-space:nowrap;">I18</div>
<svg style="position:absolute;left:95px;top:200.5px;" width="4" height="2.5" viewBox="0 0 4 2.5"><path d="M0 0 L4 0 L2 2.5 Z" fill="#555"/></svg>
<svg style="position:absolute;left:112px;top:198px;" width="3" height="9" viewBox="0 0 3 9"><circle cx="1.5" cy="1" r="0.7" fill="#aaa"/><circle cx="1.5" cy="4.5" r="0.7" fill="#aaa"/><circle cx="1.5" cy="8" r="0.7" fill="#aaa"/></svg>
<div style="position:absolute;left:123.4px;top:193.4px;width:70.1px;height:18.2px;background:#fff;border:1px solid #e0e0e0;box-sizing:border-box;"></div>
<svg style="position:absolute;left:132px;top:199px;" width="7" height="7" viewBox="0 0 7 7"><path d="M0.5 0.5 L6.5 6.5 M6.5 0.5 L0.5 6.5" stroke="#c8c8c8"/></svg>
<svg style="position:absolute;left:154.5px;top:199px;" width="9" height="7" viewBox="0 0 9 7"><path d="M0.5 3.5 L3 6 L8.5 0.5" fill="none" stroke="#c8c8c8"/></svg>
<div class="t" style="position:absolute;left:178px;top:198px;font:9px/9px 'Liberation Serif', serif;color:#555;white-space:nowrap;"><i>f</i><span style="font-size:6px"><i>x</i></span></div>
<div style="position:absolute;left:196.4px;top:193.4px;width:715px;height:45.8px;background:#fff;border:1px solid #dcdcdc;box-sizing:border-box;"></div>
<div class="t" style="position:absolute;left:204px;top:198.5px;font:8.5px/9px 'Liberation Sans', sans-serif;color:#555;white-space:nowrap;">32.275</div>
<svg style="position:absolute;left:902.5px;top:199.5px;" width="7" height="4" viewBox="0 0 7 4"><path d="M0.5 3.5 L3.5 0.5 L6.5 3.5" fill="none" stroke="#666"/></svg>
<div style="position:absolute;left:0;top:0;width:901px;height:502.4px;overflow:hidden;">
<div style="position:absolute;left:35px;top:246px;width:866px;height:256.4px;background:#fff;"></div>
<div style="position:absolute;left:35px;top:246px;width:866px;height:13.300000000000011px;background:#f6f6f6;"></div>
<div style="position:absolute;left:35px;top:259.3px;width:18.5px;height:243.09999999999997px;background:#f5f5f5;"></div>
<div style="position:absolute;left:53.0px;top:246px;width:1px;height:13.300000000000011px;background:#d4d4d4;"></div>
<div style="position:absolute;left:179.8px;top:246px;width:1px;height:13.300000000000011px;background:#d4d4d4;"></div>
<div style="position:absolute;left:324.9px;top:246px;width:1px;height:13.300000000000011px;background:#d4d4d4;"></div>
<div style="position:absolute;left:482.9px;top:246px;width:1px;height:13.300000000000011px;background:#d4d4d4;"></div>
<div style="position:absolute;left:528.0px;top:246px;width:1px;height:13.300000000000011px;background:#d4d4d4;"></div>
<div style="position:absolute;left:573.0px;top:246px;width:1px;height:13.300000000000011px;background:#d4d4d4;"></div>
<div style="position:absolute;left:618.0px;top:246px;width:1px;height:13.300000000000011px;background:#d4d4d4;"></div>
<div style="position:absolute;left:663.5px;top:246px;width:1px;height:13.300000000000011px;background:#d4d4d4;"></div>
<div style="position:absolute;left:708.2px;top:246px;width:1px;height:13.300000000000011px;background:#d4d4d4;"></div>
<div style="position:absolute;left:753.6px;top:246px;width:1px;height:13.300000000000011px;background:#d4d4d4;"></div>
<div style="position:absolute;left:35px;top:258.8px;width:866px;height:1px;background:#c8c8c8;"></div>
<div style="position:absolute;left:53px;top:246px;width:1px;height:256.4px;background:#c0c0c0;"></div>
<div style="position:absolute;left:35px;top:278.0px;width:18.5px;height:1px;background:#d8d8d8;"></div>
<div style="position:absolute;left:35px;top:291.5px;width:18.5px;height:1px;background:#d8d8d8;"></div>
<div style="position:absolute;left:35px;top:305.0px;width:18.5px;height:1px;background:#d8d8d8;"></div>
<div style="position:absolute;left:35px;top:318.54px;width:18.5px;height:1px;background:#d8d8d8;"></div>
<div style="position:absolute;left:35px;top:332.08px;width:18.5px;height:1px;background:#d8d8d8;"></div>
<div style="position:absolute;left:35px;top:345.62px;width:18.5px;height:1px;background:#d8d8d8;"></div>
<div style="position:absolute;left:35px;top:359.15999999999997px;width:18.5px;height:1px;background:#d8d8d8;"></div>
<div style="position:absolute;left:35px;top:372.7px;width:18.5px;height:1px;background:#d8d8d8;"></div>
<div style="position:absolute;left:35px;top:386.24px;width:18.5px;height:1px;background:#d8d8d8;"></div>
<div style="position:absolute;left:35px;top:399.78px;width:18.5px;height:1px;background:#d8d8d8;"></div>
<div style="position:absolute;left:35px;top:413.32px;width:18.5px;height:1px;background:#d8d8d8;"></div>
<div style="position:absolute;left:35px;top:426.86px;width:18.5px;height:1px;background:#d8d8d8;"></div>
<div style="position:absolute;left:35px;top:440.4px;width:18.5px;height:1px;background:#d8d8d8;"></div>
<div style="position:absolute;left:35px;top:453.94px;width:18.5px;height:1px;background:#d8d8d8;"></div>
<div style="position:absolute;left:35px;top:467.48px;width:18.5px;height:1px;background:#d8d8d8;"></div>
<div style="position:absolute;left:35px;top:481.02px;width:18.5px;height:1px;background:#d8d8d8;"></div>
<div style="position:absolute;left:35px;top:494.56px;width:18.5px;height:1px;background:#d8d8d8;"></div>
<div style="position:absolute;left:708.7px;top:246.5px;width:45.39999999999998px;height:12.300000000000011px;background:#d6d6d6;"></div>
<div style="position:absolute;left:708.7px;top:257.3px;width:45.39999999999998px;height:2px;background:#3f8c66;"></div>
<svg style="position:absolute;left:42px;top:249px;" width="10" height="8" viewBox="0 0 10 8"><path d="M9 0.5 L9 7.5 L1 7.5 Z" fill="#bdbdbd"/></svg>
<div class="t" style="position:absolute;left:53.5px;top:247.5px;width:126.80000000000001px;text-align:center;font:10px/11px 'Liberation Sans', sans-serif;color:#444;white-space:nowrap;">A</div>
<div class="t" style="position:absolute;left:180.3px;top:247.5px;width:145.09999999999997px;text-align:center;font:10px/11px 'Liberation Sans', sans-serif;color:#444;white-space:nowrap;">B</div>
<div class="t" style="position:absolute;left:325.4px;top:247.5px;width:158.0px;text-align:center;font:10px/11px 'Liberation Sans', sans-serif;color:#444;white-space:nowrap;">C</div>
<div class="t" style="position:absolute;left:483.4px;top:247.5px;width:45.10000000000002px;text-align:center;font:10px/11px 'Liberation Sans', sans-serif;color:#444;white-space:nowrap;">D</div>
<div class="t" style="position:absolute;left:528.5px;top:247.5px;width:45.0px;text-align:center;font:10px/11px 'Liberation Sans', sans-serif;color:#444;white-space:nowrap;">E</div>
<div class="t" style="position:absolute;left:573.5px;top:247.5px;width:45.0px;text-align:center;font:10px/11px 'Liberation Sans', sans-serif;color:#444;white-space:nowrap;">F</div>
<div class="t" style="position:absolute;left:618.5px;top:247.5px;width:45.5px;text-align:center;font:10px/11px 'Liberation Sans', sans-serif;color:#444;white-space:nowrap;">G</div>
<div class="t" style="position:absolute;left:664px;top:247.5px;width:44.700000000000045px;text-align:center;font:10px/11px 'Liberation Sans', sans-serif;color:#444;white-space:nowrap;">H</div>
<div class="t" style="position:absolute;left:708.7px;top:247.5px;width:45.39999999999998px;text-align:center;font:10px/11px 'Liberation Sans', sans-serif;color:#444;white-space:nowrap;">I</div>
<div class="t" style="position:absolute;left:754.1px;top:247.5px;width:185.89999999999998px;text-align:center;font:10px/11px 'Liberation Sans', sans-serif;color:#444;white-space:nowrap;">J</div>
<div class="t" style="position:absolute;left:35px;top:266.3px;width:18.5px;height:12px;text-align:center;font:10.5px/12px 'Liberation Sans', sans-serif;color:#444;">1</div>
<div class="t" style="position:absolute;left:35px;top:279.8px;width:18.5px;height:12px;text-align:center;font:10.5px/12px 'Liberation Sans', sans-serif;color:#444;">2</div>
<div class="t" style="position:absolute;left:35px;top:293.3px;width:18.5px;height:12px;text-align:center;font:10.5px/12px 'Liberation Sans', sans-serif;color:#444;">3</div>
<div class="t" style="position:absolute;left:35px;top:306.84000000000003px;width:18.5px;height:12px;text-align:center;font:10.5px/12px 'Liberation Sans', sans-serif;color:#444;">4</div>
<div class="t" style="position:absolute;left:35px;top:320.38px;width:18.5px;height:12px;text-align:center;font:10.5px/12px 'Liberation Sans', sans-serif;color:#444;">5</div>
<div class="t" style="position:absolute;left:35px;top:333.92px;width:18.5px;height:12px;text-align:center;font:10.5px/12px 'Liberation Sans', sans-serif;color:#444;">6</div>
<div class="t" style="position:absolute;left:35px;top:347.46px;width:18.5px;height:12px;text-align:center;font:10.5px/12px 'Liberation Sans', sans-serif;color:#444;">7</div>
<div class="t" style="position:absolute;left:35px;top:361.0px;width:18.5px;height:12px;text-align:center;font:10.5px/12px 'Liberation Sans', sans-serif;color:#444;">8</div>
<div class="t" style="position:absolute;left:35px;top:374.54px;width:18.5px;height:12px;text-align:center;font:10.5px/12px 'Liberation Sans', sans-serif;color:#444;">9</div>
<div class="t" style="position:absolute;left:35px;top:388.08px;width:18.5px;height:12px;text-align:center;font:10.5px/12px 'Liberation Sans', sans-serif;color:#444;">10</div>
<div class="t" style="position:absolute;left:35px;top:401.62px;width:18.5px;height:12px;text-align:center;font:10.5px/12px 'Liberation Sans', sans-serif;color:#444;">11</div>
<div class="t" style="position:absolute;left:35px;top:415.16px;width:18.5px;height:12px;text-align:center;font:10.5px/12px 'Liberation Sans', sans-serif;color:#444;">12</div>
<div class="t" style="position:absolute;left:35px;top:428.7px;width:18.5px;height:12px;text-align:center;font:10.5px/12px 'Liberation Sans', sans-serif;color:#444;">13</div>
<div class="t" style="position:absolute;left:35px;top:442.24px;width:18.5px;height:12px;text-align:center;font:10.5px/12px 'Liberation Sans', sans-serif;color:#444;">14</div>
<div class="t" style="position:absolute;left:35px;top:455.78000000000003px;width:18.5px;height:12px;text-align:center;font:10.5px/12px 'Liberation Sans', sans-serif;color:#444;">15</div>
<div class="t" style="position:absolute;left:35px;top:469.32px;width:18.5px;height:12px;text-align:center;font:10.5px/12px 'Liberation Sans', sans-serif;color:#444;">16</div>
<div class="t" style="position:absolute;left:35px;top:482.86px;width:18.5px;height:12px;text-align:center;font:10.5px/12px 'Liberation Sans', sans-serif;color:#444;">17</div>
<div style="position:absolute;left:35px;top:495.06px;width:18.5px;height:7.339999999999975px;background:#d6d6d6;"></div>
<div style="position:absolute;left:52px;top:495.06px;width:2px;height:7.339999999999975px;background:#217346;"></div>
<div class="t" style="position:absolute;left:35px;top:496.40000000000003px;width:18.5px;height:12px;text-align:center;font:10.5px/12px 'Liberation Sans', sans-serif;color:#444;">18</div>
<div style="position:absolute;left:53.5px;top:373.2px;width:847.5px;height:13.54000000000002px;background:#ffff00;"></div>
<div style="position:absolute;left:53.5px;top:278.0px;width:847.5px;height:1px;background:#4a4a4a;"></div>
<div style="position:absolute;left:483.4px;top:291.5px;width:270.70000000000005px;height:1px;background:#4a4a4a;"></div>
<div style="position:absolute;left:53.5px;top:305.0px;width:847.5px;height:1px;background:#4a4a4a;"></div>
<div style="position:absolute;left:53.5px;top:318.54px;width:847.5px;height:1px;background:#4a4a4a;"></div>
<div style="position:absolute;left:53.5px;top:332.08px;width:847.5px;height:1px;background:#4a4a4a;"></div>
<div style="position:absolute;left:53.5px;top:345.62px;width:847.5px;height:1px;background:#4a4a4a;"></div>
<div style="position:absolute;left:53.5px;top:359.15999999999997px;width:847.5px;height:1px;background:#4a4a4a;"></div>
<div style="position:absolute;left:53.5px;top:372.7px;width:847.5px;height:1px;background:#4a4a4a;"></div>
<div style="position:absolute;left:53.5px;top:386.24px;width:847.5px;height:1px;background:#4a4a4a;"></div>
<div style="position:absolute;left:53.5px;top:399.78px;width:847.5px;height:1px;background:#4a4a4a;"></div>
<div style="position:absolute;left:53.5px;top:413.32px;width:847.5px;height:1px;background:#4a4a4a;"></div>
<div style="position:absolute;left:53.5px;top:426.86px;width:847.5px;height:1px;background:#4a4a4a;"></div>
<div style="position:absolute;left:53.5px;top:440.4px;width:847.5px;height:1px;background:#4a4a4a;"></div>
<div style="position:absolute;left:53.5px;top:453.94px;width:847.5px;height:1px;background:#4a4a4a;"></div>
<div style="position:absolute;left:53.5px;top:467.48px;width:847.5px;height:1px;background:#4a4a4a;"></div>
<div style="position:absolute;left:53.5px;top:481.02px;width:847.5px;height:1px;background:#4a4a4a;"></div>
<div style="position:absolute;left:53.5px;top:494.56px;width:847.5px;height:1px;background:#4a4a4a;"></div>
<div style="position:absolute;left:179.8px;top:259.3px;width:1px;height:243.09999999999997px;background:#4a4a4a;"></div>
<div style="position:absolute;left:324.9px;top:278.5px;width:1px;height:223.89999999999998px;background:#4a4a4a;"></div>
<div style="position:absolute;left:482.9px;top:278.5px;width:1px;height:223.89999999999998px;background:#4a4a4a;"></div>
<div style="position:absolute;left:528.0px;top:292.0px;width:1px;height:210.39999999999998px;background:#4a4a4a;"></div>
<div style="position:absolute;left:573.0px;top:292.0px;width:1px;height:210.39999999999998px;background:#4a4a4a;"></div>
<div style="position:absolute;left:618.0px;top:292.0px;width:1px;height:210.39999999999998px;background:#4a4a4a;"></div>
<div style="position:absolute;left:663.5px;top:292.0px;width:1px;height:210.39999999999998px;background:#4a4a4a;"></div>
<div style="position:absolute;left:708.2px;top:292.0px;width:1px;height:210.39999999999998px;background:#4a4a4a;"></div>
<div style="position:absolute;left:753.6px;top:278.5px;width:1px;height:223.89999999999998px;background:#4a4a4a;"></div>
<div style="position:absolute;left:179.8px;top:259.3px;width:1px;height:243.09999999999997px;background:#4a4a4a;"></div>
<div style="position:absolute;left:708.2px;top:494.56px;width:46.39999999999998px;height:9.339999999999975px;border:1.5px solid #217346;box-sizing:border-box;border-bottom:none;"></div>
<div class="" style="position:absolute;left:442px;top:261px;font:16px/18px 'Liberation Serif', serif;color:#1a1a1a;white-space:nowrap;"><b>2021-2022学年第一学期基层学院考评分数汇总</b></div>
<div class="t" style="position:absolute;left:53.5px;top:279.3px;width:126.80000000000001px;height:27.0px;text-align:center;font:10.5px/27.0px 'Liberation Serif', serif;color:#222;white-space:nowrap;font-weight:bold;">学院</div>
<div class="t" style="position:absolute;left:180.3px;top:279.3px;width:145.09999999999997px;height:27.0px;text-align:center;font:10.5px/27.0px 'Liberation Serif', serif;color:#222;white-space:nowrap;font-weight:bold;">学院互评平均分（20%）</div>
<div class="t" style="position:absolute;left:325.4px;top:279.3px;width:158.0px;height:27.0px;text-align:center;font:10.5px/27.0px 'Liberation Serif', serif;color:#222;white-space:nowrap;font-weight:bold;">校研会打分平均分（30%）</div>
<div class="t" style="position:absolute;left:483.4px;top:279.3px;width:270.70000000000005px;height:13.5px;text-align:center;font:10.5px/13.5px 'Liberation Serif', serif;color:#222;white-space:nowrap;font-weight:bold;">日常工作考评加分情况</div>
<div class="t" style="position:absolute;left:483.4px;top:292.8px;width:45.10000000000002px;height:13.5px;text-align:center;font:10.5px/13.5px 'Liberation Serif', serif;color:#222;white-space:nowrap;font-weight:bold;">办公室</div>
<div class="t" style="position:absolute;left:528.5px;top:292.8px;width:45.0px;height:13.5px;text-align:center;font:10.5px/13.5px 'Liberation Serif', serif;color:#222;white-space:nowrap;font-weight:bold;">文体</div>
<div class="t" style="position:absolute;left:573.5px;top:292.8px;width:45.0px;height:13.5px;text-align:center;font:10.5px/13.5px 'Liberation Serif', serif;color:#222;white-space:nowrap;font-weight:bold;">学术</div>
<div class="t" style="position:absolute;left:618.5px;top:292.8px;width:45.5px;height:13.5px;text-align:center;font:10.5px/13.5px 'Liberation Serif', serif;color:#222;white-space:nowrap;font-weight:bold;">生活</div>
<div class="t" style="position:absolute;left:664px;top:292.8px;width:44.700000000000045px;height:13.5px;text-align:center;font:10.5px/13.5px 'Liberation Serif', serif;color:#222;white-space:nowrap;font-weight:bold;">新宣</div>
<div class="t" style="position:absolute;left:708.7px;top:292.8px;width:45.39999999999998px;height:13.5px;text-align:center;font:10.5px/13.5px 'Liberation Serif', serif;color:#222;white-space:nowrap;font-weight:bold;">总分</div>
<div class="t" style="position:absolute;left:754.1px;top:278.5px;width:185.89999999999998px;height:27.0px;text-align:center;font:bold 10.5px/27.0px 'Liberation Serif', serif;color:#222;white-space:nowrap;">日常工作考评加分成绩（50%）</div>
<div class="t" style="position:absolute;left:53.5px;top:306.5px;width:126.80000000000001px;height:13.54000000000002px;text-align:center;font:10px/13.54000000000002px 'Liberation Serif', serif;color:#2a2a2a;white-space:nowrap;letter-spacing:0.3px;">教育学院</div>
<div class="t" style="position:absolute;left:180.3px;top:305.8px;width:145.09999999999997px;height:13.54000000000002px;text-align:center;font:10.2px/13.54000000000002px 'Liberation Serif', serif;color:#222;white-space:nowrap;">21.7280</div>
<div class="t" style="position:absolute;left:325.4px;top:305.8px;width:158.0px;height:13.54000000000002px;text-align:center;font:10.2px/13.54000000000002px 'Liberation Serif', serif;color:#222;white-space:nowrap;">23.9880</div>
<div class="t" style="position:absolute;left:483.4px;top:305.8px;width:45.10000000000002px;height:13.54000000000002px;text-align:center;font:10.2px/13.54000000000002px 'Liberation Serif', serif;color:#222;white-space:nowrap;">12.8</div>
<div class="t" style="position:absolute;left:528.5px;top:305.8px;width:45.0px;height:13.54000000000002px;text-align:center;font:10.2px/13.54000000000002px 'Liberation Serif', serif;color:#222;white-space:nowrap;">17.28</div>
<div class="t" style="position:absolute;left:573.5px;top:305.8px;width:45.0px;height:13.54000000000002px;text-align:center;font:10.2px/13.54000000000002px 'Liberation Serif', serif;color:#222;white-space:nowrap;">24.7</div>
<div class="t" style="position:absolute;left:618.5px;top:305.8px;width:45.5px;height:13.54000000000002px;text-align:center;font:10.2px/13.54000000000002px 'Liberation Serif', serif;color:#222;white-space:nowrap;">17.9</div>
<div class="t" style="position:absolute;left:664px;top:305.8px;width:44.700000000000045px;height:13.54000000000002px;text-align:center;font:10.2px/13.54000000000002px 'Liberation Serif', serif;color:#222;white-space:nowrap;">20.27</div>
<div class="t" style="position:absolute;left:708.7px;top:305.8px;width:45.39999999999998px;height:13.54000000000002px;text-align:center;font:10.2px/13.54000000000002px 'Liberation Serif', serif;color:#222;white-space:nowrap;">92.95</div>
<div class="t" style="position:absolute;left:754.1px;top:305.8px;width:185.89999999999998px;height:13.54000000000002px;text-align:center;font:10.2px/13.54000000000002px 'Liberation Serif', serif;color:#222;white-space:nowrap;">46.475</div>
<div class="t" style="position:absolute;left:53.5px;top:320.04px;width:126.80000000000001px;height:13.539999999999964px;text-align:center;font:10px/13.539999999999964px 'Liberation Serif', serif;color:#2a2a2a;white-space:nowrap;letter-spacing:0.3px;">马克思主义学院</div>
<div class="t" style="position:absolute;left:180.3px;top:319.34000000000003px;width:145.09999999999997px;height:13.539999999999964px;text-align:center;font:10.2px/13.539999999999964px 'Liberation Serif', serif;color:#222;white-space:nowrap;">20.1200</div>
<div class="t" style="position:absolute;left:325.4px;top:319.34000000000003px;width:158.0px;height:13.539999999999964px;text-align:center;font:10.2px/13.539999999999964px 'Liberation Serif', serif;color:#222;white-space:nowrap;">24.7080</div>
<div class="t" style="position:absolute;left:483.4px;top:319.34000000000003px;width:45.10000000000002px;height:13.539999999999964px;text-align:center;font:10.2px/13.539999999999964px 'Liberation Serif', serif;color:#222;white-space:nowrap;">10.1</div>
<div class="t" style="position:absolute;left:528.5px;top:319.34000000000003px;width:45.0px;height:13.539999999999964px;text-align:center;font:10.2px/13.539999999999964px 'Liberation Serif', serif;color:#222;white-space:nowrap;">18.95</div>
<div class="t" style="position:absolute;left:573.5px;top:319.34000000000003px;width:45.0px;height:13.539999999999964px;text-align:center;font:10.2px/13.539999999999964px 'Liberation Serif', serif;color:#222;white-space:nowrap;">25.4</div>
<div class="t" style="position:absolute;left:618.5px;top:319.34000000000003px;width:45.5px;height:13.539999999999964px;text-align:center;font:10.2px/13.539999999999964px 'Liberation Serif', serif;color:#222;white-space:nowrap;">18.9</div>
<div class="t" style="position:absolute;left:664px;top:319.34000000000003px;width:44.700000000000045px;height:13.539999999999964px;text-align:center;font:10.2px/13.539999999999964px 'Liberation Serif', serif;color:#222;white-space:nowrap;">16.7</div>
<div class="t" style="position:absolute;left:708.7px;top:319.34000000000003px;width:45.39999999999998px;height:13.539999999999964px;text-align:center;font:10.2px/13.539999999999964px 'Liberation Serif', serif;color:#222;white-space:nowrap;">90.05</div>
<div class="t" style="position:absolute;left:754.1px;top:319.34000000000003px;width:185.89999999999998px;height:13.539999999999964px;text-align:center;font:10.2px/13.539999999999964px 'Liberation Serif', serif;color:#222;white-space:nowrap;">45.025</div>
<div class="t" style="position:absolute;left:53.5px;top:333.58px;width:126.80000000000001px;height:13.54000000000002px;text-align:center;font:10px/13.54000000000002px 'Liberation Serif', serif;color:#2a2a2a;white-space:nowrap;letter-spacing:0.3px;">文学院</div>
<div class="t" style="position:absolute;left:180.3px;top:332.88px;width:145.09999999999997px;height:13.54000000000002px;text-align:center;font:10.2px/13.54000000000002px 'Liberation Serif', serif;color:#222;white-space:nowrap;">20.2880</div>
<div class="t" style="position:absolute;left:325.4px;top:332.88px;width:158.0px;height:13.54000000000002px;text-align:center;font:10.2px/13.54000000000002px 'Liberation Serif', serif;color:#222;white-space:nowrap;">24.3900</div>
<div class="t" style="position:absolute;left:483.4px;top:332.88px;width:45.10000000000002px;height:13.54000000000002px;text-align:center;font:10.2px/13.54000000000002px 'Liberation Serif', serif;color:#222;white-space:nowrap;">11.7</div>
<div class="t" style="position:absolute;left:528.5px;top:332.88px;width:45.0px;height:13.54000000000002px;text-align:center;font:10.2px/13.54000000000002px 'Liberation Serif', serif;color:#222;white-space:nowrap;">18.1</div>
<div class="t" style="position:absolute;left:573.5px;top:332.88px;width:45.0px;height:13.54000000000002px;text-align:center;font:10.2px/13.54000000000002px 'Liberation Serif', serif;color:#222;white-space:nowrap;">24.7</div>
<div class="t" style="position:absolute;left:618.5px;top:332.88px;width:45.5px;height:13.54000000000002px;text-align:center;font:10.2px/13.54000000000002px 'Liberation Serif', serif;color:#222;white-space:nowrap;">17.3</div>
<div class="t" style="position:absolute;left:664px;top:332.88px;width:44.700000000000045px;height:13.54000000000002px;text-align:center;font:10.2px/13.54000000000002px 'Liberation Serif', serif;color:#222;white-space:nowrap;">15.85</div>
<div class="t" style="position:absolute;left:708.7px;top:332.88px;width:45.39999999999998px;height:13.54000000000002px;text-align:center;font:10.2px/13.54000000000002px 'Liberation Serif', serif;color:#222;white-space:nowrap;">87.65</div>
<div class="t" style="position:absolute;left:754.1px;top:332.88px;width:185.89999999999998px;height:13.54000000000002px;text-align:center;font:10.2px/13.54000000000002px 'Liberation Serif', serif;color:#222;white-space:nowrap;">43.825</div>
<div class="t" style="position:absolute;left:53.5px;top:347.12px;width:126.80000000000001px;height:13.539999999999964px;text-align:center;font:10px/13.539999999999964px 'Liberation Serif', serif;color:#2a2a2a;white-space:nowrap;letter-spacing:0.3px;">人工智能教育学部</div>
<div class="t" style="position:absolute;left:180.3px;top:346.42px;width:145.09999999999997px;height:13.539999999999964px;text-align:center;font:10.2px/13.539999999999964px 'Liberation Serif', serif;color:#222;white-space:nowrap;">21.2000</div>
<div class="t" style="position:absolute;left:325.4px;top:346.42px;width:158.0px;height:13.539999999999964px;text-align:center;font:10.2px/13.539999999999964px 'Liberation Serif', serif;color:#222;white-space:nowrap;">23.9940</div>
<div class="t" style="position:absolute;left:483.4px;top:346.42px;width:45.10000000000002px;height:13.539999999999964px;text-align:center;font:10.2px/13.539999999999964px 'Liberation Serif', serif;color:#222;white-space:nowrap;">9.6</div>
<div class="t" style="position:absolute;left:528.5px;top:346.42px;width:45.0px;height:13.539999999999964px;text-align:center;font:10.2px/13.539999999999964px 'Liberation Serif', serif;color:#222;white-space:nowrap;">16.2</div>
<div class="t" style="position:absolute;left:573.5px;top:346.42px;width:45.0px;height:13.539999999999964px;text-align:center;font:10.2px/13.539999999999964px 'Liberation Serif', serif;color:#222;white-space:nowrap;">24.8</div>
<div class="t" style="position:absolute;left:618.5px;top:346.42px;width:45.5px;height:13.539999999999964px;text-align:center;font:10.2px/13.539999999999964px 'Liberation Serif', serif;color:#222;white-space:nowrap;">13.8</div>
<div class="t" style="position:absolute;left:708.7px;top:346.42px;width:45.39999999999998px;height:13.539999999999964px;text-align:center;font:10.2px/13.539999999999964px 'Liberation Serif', serif;color:#222;white-space:nowrap;">74.8</div>
<div class="t" style="position:absolute;left:754.1px;top:346.42px;width:185.89999999999998px;height:13.539999999999964px;text-align:center;font:10.2px/13.539999999999964px 'Liberation Serif', serif;color:#222;white-space:nowrap;">37.4</div>
<div class="t" style="position:absolute;left:53.5px;top:360.65999999999997px;width:126.80000000000001px;height:13.54000000000002px;text-align:center;font:10px/13.54000000000002px 'Liberation Serif', serif;color:#2a2a2a;white-space:nowrap;letter-spacing:0.3px;">城市与环境科学学院</div>
<div class="t" style="position:absolute;left:180.3px;top:359.96px;width:145.09999999999997px;height:13.54000000000002px;text-align:center;font:10.2px/13.54000000000002px 'Liberation Serif', serif;color:#222;white-space:nowrap;">20.9200</div>
<div class="t" style="position:absolute;left:325.4px;top:359.96px;width:158.0px;height:13.54000000000002px;text-align:center;font:10.2px/13.54000000000002px 'Liberation Serif', serif;color:#222;white-space:nowrap;">24.0900</div>
<div class="t" style="position:absolute;left:483.4px;top:359.96px;width:45.10000000000002px;height:13.54000000000002px;text-align:center;font:10.2px/13.54000000000002px 'Liberation Serif', serif;color:#222;white-space:nowrap;">9.7</div>
<div class="t" style="position:absolute;left:528.5px;top:359.96px;width:45.0px;height:13.54000000000002px;text-align:center;font:10.2px/13.54000000000002px 'Liberation Serif', serif;color:#222;white-space:nowrap;">12.4</div>
<div class="t" style="position:absolute;left:573.5px;top:359.96px;width:45.0px;height:13.54000000000002px;text-align:center;font:10.2px/13.54000000000002px 'Liberation Serif', serif;color:#222;white-space:nowrap;">24.5</div>
<div class="t" style="position:absolute;left:618.5px;top:359.96px;width:45.5px;height:13.54000000000002px;text-align:center;font:10.2px/13.54000000000002px 'Liberation Serif', serif;color:#222;white-space:nowrap;">12.5</div>
<div class="t" style="position:absolute;left:664px;top:359.96px;width:44.700000000000045px;height:13.54000000000002px;text-align:center;font:10.2px/13.54000000000002px 'Liberation Serif', serif;color:#222;white-space:nowrap;">11.7</div>
<div class="t" style="position:absolute;left:708.7px;top:359.96px;width:45.39999999999998px;height:13.54000000000002px;text-align:center;font:10.2px/13.54000000000002px 'Liberation Serif', serif;color:#222;white-space:nowrap;">70.8</div>
<div class="t" style="position:absolute;left:754.1px;top:359.96px;width:185.89999999999998px;height:13.54000000000002px;text-align:center;font:10.2px/13.54000000000002px 'Liberation Serif', serif;color:#222;white-space:nowrap;">35.4</div>
<div class="t" style="position:absolute;left:53.5px;top:374.2px;width:126.80000000000001px;height:13.54000000000002px;text-align:center;font:10px/13.54000000000002px 'Liberation Serif', serif;color:#2a2a2a;white-space:nowrap;letter-spacing:0.3px;">信息管理学院</div>
<div class="t" style="position:absolute;left:180.3px;top:373.5px;width:145.09999999999997px;height:13.54000000000002px;text-align:center;font:10.2px/13.54000000000002px 'Liberation Serif', serif;color:#222;white-space:nowrap;">20.5040</div>
<div class="t" style="position:absolute;left:325.4px;top:373.5px;width:158.0px;height:13.54000000000002px;text-align:center;font:10.2px/13.54000000000002px 'Liberation Serif', serif;color:#222;white-space:nowrap;">24.1020</div>
<div class="t" style="position:absolute;left:483.4px;top:373.5px;width:45.10000000000002px;height:13.54000000000002px;text-align:center;font:10.2px/13.54000000000002px 'Liberation Serif', serif;color:#222;white-space:nowrap;">9.6</div>
<div class="t" style="position:absolute;left:528.5px;top:373.5px;width:45.0px;height:13.54000000000002px;text-align:center;font:10.2px/13.54000000000002px 'Liberation Serif', serif;color:#222;white-space:nowrap;">13.2</div>
<div class="t" style="position:absolute;left:573.5px;top:373.5px;width:45.0px;height:13.54000000000002px;text-align:center;font:10.2px/13.54000000000002px 'Liberation Serif', serif;color:#222;white-space:nowrap;">20.4</div>
<div class="t" style="position:absolute;left:618.5px;top:373.5px;width:45.5px;height:13.54000000000002px;text-align:center;font:10.2px/13.54000000000002px 'Liberation Serif', serif;color:#222;white-space:nowrap;">9.7</div>
<div class="t" style="position:absolute;left:664px;top:373.5px;width:44.700000000000045px;height:13.54000000000002px;text-align:center;font:10.2px/13.54000000000002px 'Liberation Serif', serif;color:#222;white-space:nowrap;">16.7</div>
<div class="t" style="position:absolute;left:708.7px;top:373.5px;width:45.39999999999998px;height:13.54000000000002px;text-align:center;font:10.2px/13.54000000000002px 'Liberation Serif', serif;color:#222;white-space:nowrap;">69.6</div>
<div class="t" style="position:absolute;left:754.1px;top:373.5px;width:185.89999999999998px;height:13.54000000000002px;text-align:center;font:10.2px/13.54000000000002px 'Liberation Serif', serif;color:#222;white-space:nowrap;">34.8</div>
<div class="t" style="position:absolute;left:53.5px;top:387.74px;width:126.80000000000001px;height:13.539999999999964px;text-align:center;font:10px/13.539999999999964px 'Liberation Serif', serif;color:#2a2a2a;white-space:nowrap;letter-spacing:0.3px;">数学与统计学学院</div>
<div class="t" style="position:absolute;left:180.3px;top:387.04px;width:145.09999999999997px;height:13.539999999999964px;text-align:center;font:10.2px/13.539999999999964px 'Liberation Serif', serif;color:#222;white-space:nowrap;">20.5760</div>
<div class="t" style="position:absolute;left:325.4px;top:387.04px;width:158.0px;height:13.539999999999964px;text-align:center;font:10.2px/13.539999999999964px 'Liberation Serif', serif;color:#222;white-space:nowrap;">24.8160</div>
<div class="t" style="position:absolute;left:483.4px;top:387.04px;width:45.10000000000002px;height:13.539999999999964px;text-align:center;font:10.2px/13.539999999999964px 'Liberation Serif', serif;color:#222;white-space:nowrap;">6.2</div>
<div class="t" style="position:absolute;left:528.5px;top:387.04px;width:45.0px;height:13.539999999999964px;text-align:center;font:10.2px/13.539999999999964px 'Liberation Serif', serif;color:#222;white-space:nowrap;">17.6</div>
<div class="t" style="position:absolute;left:573.5px;top:387.04px;width:45.0px;height:13.539999999999964px;text-align:center;font:10.2px/13.539999999999964px 'Liberation Serif', serif;color:#222;white-space:nowrap;">15.5</div>
<div class="t" style="position:absolute;left:618.5px;top:387.04px;width:45.5px;height:13.539999999999964px;text-align:center;font:10.2px/13.539999999999964px 'Liberation Serif', serif;color:#222;white-space:nowrap;">9.1</div>
<div class="t" style="position:absolute;left:664px;top:387.04px;width:44.700000000000045px;height:13.539999999999964px;text-align:center;font:10.2px/13.539999999999964px 'Liberation Serif', serif;color:#222;white-space:nowrap;">9.7</div>
<div class="t" style="position:absolute;left:708.7px;top:387.04px;width:45.39999999999998px;height:13.539999999999964px;text-align:center;font:10.2px/13.539999999999964px 'Liberation Serif', serif;color:#222;white-space:nowrap;">58.1</div>
<div class="t" style="position:absolute;left:754.1px;top:387.04px;width:185.89999999999998px;height:13.539999999999964px;text-align:center;font:10.2px/13.539999999999964px 'Liberation Serif', serif;color:#222;white-space:nowrap;">29.05</div>
<div class="t" style="position:absolute;left:53.5px;top:401.28px;width:126.80000000000001px;height:13.54000000000002px;text-align:center;font:10px/13.54000000000002px 'Liberation Serif', serif;color:#2a2a2a;white-space:nowrap;letter-spacing:0.3px;">政治与国际关系学院</div>
<div class="t" style="position:absolute;left:180.3px;top:400.58px;width:145.09999999999997px;height:13.54000000000002px;text-align:center;font:10.2px/13.54000000000002px 'Liberation Serif', serif;color:#222;white-space:nowrap;">20.9120</div>
<div class="t" style="position:absolute;left:325.4px;top:400.58px;width:158.0px;height:13.54000000000002px;text-align:center;font:10.2px/13.54000000000002px 'Liberation Serif', serif;color:#222;white-space:nowrap;">24.5880</div>
<div class="t" style="position:absolute;left:483.4px;top:400.58px;width:45.10000000000002px;height:13.54000000000002px;text-align:center;font:10.2px/13.54000000000002px 'Liberation Serif', serif;color:#222;white-space:nowrap;">8.8</div>
<div class="t" style="position:absolute;left:528.5px;top:400.58px;width:45.0px;height:13.54000000000002px;text-align:center;font:10.2px/13.54000000000002px 'Liberation Serif', serif;color:#222;white-space:nowrap;">9.6</div>
<div class="t" style="position:absolute;left:573.5px;top:400.58px;width:45.0px;height:13.54000000000002px;text-align:center;font:10.2px/13.54000000000002px 'Liberation Serif', serif;color:#222;white-space:nowrap;">15.8</div>
<div class="t" style="position:absolute;left:618.5px;top:400.58px;width:45.5px;height:13.54000000000002px;text-align:center;font:10.2px/13.54000000000002px 'Liberation Serif', serif;color:#222;white-space:nowrap;">10.1</div>
<div class="t" style="position:absolute;left:664px;top:400.58px;width:44.700000000000045px;height:13.54000000000002px;text-align:center;font:10.2px/13.54000000000002px 'Liberation Serif', serif;color:#222;white-space:nowrap;">12.9</div>
<div class="t" style="position:absolute;left:708.7px;top:400.58px;width:45.39999999999998px;height:13.54000000000002px;text-align:center;font:10.2px/13.54000000000002px 'Liberation Serif', serif;color:#222;white-space:nowrap;">57.2</div>
<div class="t" style="position:absolute;left:754.1px;top:400.58px;width:185.89999999999998px;height:13.54000000000002px;text-align:center;font:10.2px/13.54000000000002px 'Liberation Serif', serif;color:#222;white-space:nowrap;">28.6</div>
<div class="t" style="position:absolute;left:53.5px;top:414.82px;width:126.80000000000001px;height:13.54000000000002px;text-align:center;font:10px/13.54000000000002px 'Liberation Serif', serif;color:#2a2a2a;white-space:nowrap;letter-spacing:0.3px;">公共管理学院</div>
<div class="t" style="position:absolute;left:180.3px;top:414.12px;width:145.09999999999997px;height:13.54000000000002px;text-align:center;font:10.2px/13.54000000000002px 'Liberation Serif', serif;color:#222;white-space:nowrap;">19.8800</div>
<div class="t" style="position:absolute;left:325.4px;top:414.12px;width:158.0px;height:13.54000000000002px;text-align:center;font:10.2px/13.54000000000002px 'Liberation Serif', serif;color:#222;white-space:nowrap;">22.9500</div>
<div class="t" style="position:absolute;left:483.4px;top:414.12px;width:45.10000000000002px;height:13.54000000000002px;text-align:center;font:10.2px/13.54000000000002px 'Liberation Serif', serif;color:#222;white-space:nowrap;">6</div>
<div class="t" style="position:absolute;left:528.5px;top:414.12px;width:45.0px;height:13.54000000000002px;text-align:center;font:10.2px/13.54000000000002px 'Liberation Serif', serif;color:#222;white-space:nowrap;">10.7</div>
<div class="t" style="position:absolute;left:573.5px;top:414.12px;width:45.0px;height:13.54000000000002px;text-align:center;font:10.2px/13.54000000000002px 'Liberation Serif', serif;color:#222;white-space:nowrap;">20.5</div>
<div class="t" style="position:absolute;left:618.5px;top:414.12px;width:45.5px;height:13.54000000000002px;text-align:center;font:10.2px/13.54000000000002px 'Liberation Serif', serif;color:#222;white-space:nowrap;">13.2</div>
<div class="t" style="position:absolute;left:664px;top:414.12px;width:44.700000000000045px;height:13.54000000000002px;text-align:center;font:10.2px/13.54000000000002px 'Liberation Serif', serif;color:#222;white-space:nowrap;">10</div>
<div class="t" style="position:absolute;left:708.7px;top:414.12px;width:45.39999999999998px;height:13.54000000000002px;text-align:center;font:10.2px/13.54000000000002px 'Liberation Serif', serif;color:#222;white-space:nowrap;">60.4</div>
<div class="t" style="position:absolute;left:754.1px;top:414.12px;width:185.89999999999998px;height:13.54000000000002px;text-align:center;font:10.2px/13.54000000000002px 'Liberation Serif', serif;color:#222;white-space:nowrap;">30.2</div>
<div class="t" style="position:absolute;left:53.5px;top:428.36px;width:126.80000000000001px;height:13.539999999999964px;text-align:center;font:10px/13.539999999999964px 'Liberation Serif', serif;color:#2a2a2a;white-space:nowrap;letter-spacing:0.3px;">新闻传播学院</div>
<div class="t" style="position:absolute;left:180.3px;top:427.66px;width:145.09999999999997px;height:13.539999999999964px;text-align:center;font:10.2px/13.539999999999964px 'Liberation Serif', serif;color:#222;white-space:nowrap;">19.9840</div>
<div class="t" style="position:absolute;left:325.4px;top:427.66px;width:158.0px;height:13.539999999999964px;text-align:center;font:10.2px/13.539999999999964px 'Liberation Serif', serif;color:#222;white-space:nowrap;">22.2120</div>
<div class="t" style="position:absolute;left:483.4px;top:427.66px;width:45.10000000000002px;height:13.539999999999964px;text-align:center;font:10.2px/13.539999999999964px 'Liberation Serif', serif;color:#222;white-space:nowrap;">8.7</div>
<div class="t" style="position:absolute;left:528.5px;top:427.66px;width:45.0px;height:13.539999999999964px;text-align:center;font:10.2px/13.539999999999964px 'Liberation Serif', serif;color:#222;white-space:nowrap;">17.075</div>
<div class="t" style="position:absolute;left:573.5px;top:427.66px;width:45.0px;height:13.539999999999964px;text-align:center;font:10.2px/13.539999999999964px 'Liberation Serif', serif;color:#222;white-space:nowrap;">9.5</div>
<div class="t" style="position:absolute;left:618.5px;top:427.66px;width:45.5px;height:13.539999999999964px;text-align:center;font:10.2px/13.539999999999964px 'Liberation Serif', serif;color:#222;white-space:nowrap;">11.4</div>
<div class="t" style="position:absolute;left:664px;top:427.66px;width:44.700000000000045px;height:13.539999999999964px;text-align:center;font:10.2px/13.539999999999964px 'Liberation Serif', serif;color:#222;white-space:nowrap;">9.7</div>
<div class="t" style="position:absolute;left:708.7px;top:427.66px;width:45.39999999999998px;height:13.539999999999964px;text-align:center;font:10.2px/13.539999999999964px 'Liberation Serif', serif;color:#222;white-space:nowrap;">56.375</div>
<div class="t" style="position:absolute;left:754.1px;top:427.66px;width:185.89999999999998px;height:13.539999999999964px;text-align:center;font:10.2px/13.539999999999964px 'Liberation Serif', serif;color:#222;white-space:nowrap;">28.1875</div>
<div class="t" style="position:absolute;left:53.5px;top:441.9px;width:126.80000000000001px;height:13.54000000000002px;text-align:center;font:10px/13.54000000000002px 'Liberation Serif', serif;color:#2a2a2a;white-space:nowrap;letter-spacing:0.3px;">化学学院</div>
<div class="t" style="position:absolute;left:180.3px;top:441.2px;width:145.09999999999997px;height:13.54000000000002px;text-align:center;font:10.2px/13.54000000000002px 'Liberation Serif', serif;color:#222;white-space:nowrap;">20.5120</div>
<div class="t" style="position:absolute;left:325.4px;top:441.2px;width:158.0px;height:13.54000000000002px;text-align:center;font:10.2px/13.54000000000002px 'Liberation Serif', serif;color:#222;white-space:nowrap;">23.8200</div>
<div class="t" style="position:absolute;left:483.4px;top:441.2px;width:45.10000000000002px;height:13.54000000000002px;text-align:center;font:10.2px/13.54000000000002px 'Liberation Serif', serif;color:#222;white-space:nowrap;">9.5</div>
<div class="t" style="position:absolute;left:528.5px;top:441.2px;width:45.0px;height:13.54000000000002px;text-align:center;font:10.2px/13.54000000000002px 'Liberation Serif', serif;color:#222;white-space:nowrap;">8.8</div>
<div class="t" style="position:absolute;left:573.5px;top:441.2px;width:45.0px;height:13.54000000000002px;text-align:center;font:10.2px/13.54000000000002px 'Liberation Serif', serif;color:#222;white-space:nowrap;">11.5</div>
<div class="t" style="position:absolute;left:618.5px;top:441.2px;width:45.5px;height:13.54000000000002px;text-align:center;font:10.2px/13.54000000000002px 'Liberation Serif', serif;color:#222;white-space:nowrap;">8.2</div>
<div class="t" style="position:absolute;left:664px;top:441.2px;width:44.700000000000045px;height:13.54000000000002px;text-align:center;font:10.2px/13.54000000000002px 'Liberation Serif', serif;color:#222;white-space:nowrap;">6.5</div>
<div class="t" style="position:absolute;left:708.7px;top:441.2px;width:45.39999999999998px;height:13.54000000000002px;text-align:center;font:10.2px/13.54000000000002px 'Liberation Serif', serif;color:#222;white-space:nowrap;">44.5</div>
<div class="t" style="position:absolute;left:754.1px;top:441.2px;width:185.89999999999998px;height:13.54000000000002px;text-align:center;font:10.2px/13.54000000000002px 'Liberation Serif', serif;color:#222;white-space:nowrap;">22.25</div>
<div class="t" style="position:absolute;left:53.5px;top:455.44px;width:126.80000000000001px;height:13.54000000000002px;text-align:center;font:10px/13.54000000000002px 'Liberation Serif', serif;color:#2a2a2a;white-space:nowrap;letter-spacing:0.3px;">心理学院</div>
<div class="t" style="position:absolute;left:180.3px;top:454.74px;width:145.09999999999997px;height:13.54000000000002px;text-align:center;font:10.2px/13.54000000000002px 'Liberation Serif', serif;color:#222;white-space:nowrap;">20.1440</div>
<div class="t" style="position:absolute;left:325.4px;top:454.74px;width:158.0px;height:13.54000000000002px;text-align:center;font:10.2px/13.54000000000002px 'Liberation Serif', serif;color:#222;white-space:nowrap;">24.3780</div>
<div class="t" style="position:absolute;left:483.4px;top:454.74px;width:45.10000000000002px;height:13.54000000000002px;text-align:center;font:10.2px/13.54000000000002px 'Liberation Serif', serif;color:#222;white-space:nowrap;">10.3</div>
<div class="t" style="position:absolute;left:528.5px;top:454.74px;width:45.0px;height:13.54000000000002px;text-align:center;font:10.2px/13.54000000000002px 'Liberation Serif', serif;color:#222;white-space:nowrap;">6.2</div>
<div class="t" style="position:absolute;left:573.5px;top:454.74px;width:45.0px;height:13.54000000000002px;text-align:center;font:10.2px/13.54000000000002px 'Liberation Serif', serif;color:#222;white-space:nowrap;">12</div>
<div class="t" style="position:absolute;left:618.5px;top:454.74px;width:45.5px;height:13.54000000000002px;text-align:center;font:10.2px/13.54000000000002px 'Liberation Serif', serif;color:#222;white-space:nowrap;">8.7</div>
<div class="t" style="position:absolute;left:664px;top:454.74px;width:44.700000000000045px;height:13.54000000000002px;text-align:center;font:10.2px/13.54000000000002px 'Liberation Serif', serif;color:#222;white-space:nowrap;">3.1</div>
<div class="t" style="position:absolute;left:708.7px;top:454.74px;width:45.39999999999998px;height:13.54000000000002px;text-align:center;font:10.2px/13.54000000000002px 'Liberation Serif', serif;color:#222;white-space:nowrap;">40.3</div>
<div class="t" style="position:absolute;left:754.1px;top:454.74px;width:185.89999999999998px;height:13.54000000000002px;text-align:center;font:10.2px/13.54000000000002px 'Liberation Serif', serif;color:#222;white-space:nowrap;">20.15</div>
<div class="t" style="position:absolute;left:53.5px;top:468.98px;width:126.80000000000001px;height:13.539999999999964px;text-align:center;font:10px/13.539999999999964px 'Liberation Serif', serif;color:#2a2a2a;white-space:nowrap;letter-spacing:0.3px;">物理科学与技术学院</div>
<div class="t" style="position:absolute;left:180.3px;top:468.28000000000003px;width:145.09999999999997px;height:13.539999999999964px;text-align:center;font:10.2px/13.539999999999964px 'Liberation Serif', serif;color:#222;white-space:nowrap;">19.7920</div>
<div class="t" style="position:absolute;left:325.4px;top:468.28000000000003px;width:158.0px;height:13.539999999999964px;text-align:center;font:10.2px/13.539999999999964px 'Liberation Serif', serif;color:#222;white-space:nowrap;">23.8260</div>
<div class="t" style="position:absolute;left:483.4px;top:468.28000000000003px;width:45.10000000000002px;height:13.539999999999964px;text-align:center;font:10.2px/13.539999999999964px 'Liberation Serif', serif;color:#222;white-space:nowrap;">7</div>
<div class="t" style="position:absolute;left:528.5px;top:468.28000000000003px;width:45.0px;height:13.539999999999964px;text-align:center;font:10.2px/13.539999999999964px 'Liberation Serif', serif;color:#222;white-space:nowrap;">11.3</div>
<div class="t" style="position:absolute;left:573.5px;top:468.28000000000003px;width:45.0px;height:13.539999999999964px;text-align:center;font:10.2px/13.539999999999964px 'Liberation Serif', serif;color:#222;white-space:nowrap;">5.5</div>
<div class="t" style="position:absolute;left:618.5px;top:468.28000000000003px;width:45.5px;height:13.539999999999964px;text-align:center;font:10.2px/13.539999999999964px 'Liberation Serif', serif;color:#222;white-space:nowrap;">7.7</div>
<div class="t" style="position:absolute;left:664px;top:468.28000000000003px;width:44.700000000000045px;height:13.539999999999964px;text-align:center;font:10.2px/13.539999999999964px 'Liberation Serif', serif;color:#222;white-space:nowrap;">7.7</div>
<div class="t" style="position:absolute;left:708.7px;top:468.28000000000003px;width:45.39999999999998px;height:13.539999999999964px;text-align:center;font:10.2px/13.539999999999964px 'Liberation Serif', serif;color:#222;white-space:nowrap;">39.2</div>
<div class="t" style="position:absolute;left:754.1px;top:468.28000000000003px;width:185.89999999999998px;height:13.539999999999964px;text-align:center;font:10.2px/13.539999999999964px 'Liberation Serif', serif;color:#222;white-space:nowrap;">19.6</div>
<div class="t" style="position:absolute;left:53.5px;top:482.52px;width:126.80000000000001px;height:13.54000000000002px;text-align:center;font:10px/13.54000000000002px 'Liberation Serif', serif;color:#2a2a2a;white-space:nowrap;letter-spacing:0.3px;">历史文化学院</div>
<div class="t" style="position:absolute;left:180.3px;top:481.82px;width:145.09999999999997px;height:13.54000000000002px;text-align:center;font:10.2px/13.54000000000002px 'Liberation Serif', serif;color:#222;white-space:nowrap;">20.3920</div>
<div class="t" style="position:absolute;left:325.4px;top:481.82px;width:158.0px;height:13.54000000000002px;text-align:center;font:10.2px/13.54000000000002px 'Liberation Serif', serif;color:#222;white-space:nowrap;">23.5440</div>
<div class="t" style="position:absolute;left:483.4px;top:481.82px;width:45.10000000000002px;height:13.54000000000002px;text-align:center;font:10.2px/13.54000000000002px 'Liberation Serif', serif;color:#222;white-space:nowrap;">6.7</div>
<div class="t" style="position:absolute;left:528.5px;top:481.82px;width:45.0px;height:13.54000000000002px;text-align:center;font:10.2px/13.54000000000002px 'Liberation Serif', serif;color:#222;white-space:nowrap;">8.15</div>
<div class="t" style="position:absolute;left:573.5px;top:481.82px;width:45.0px;height:13.54000000000002px;text-align:center;font:10.2px/13.54000000000002px 'Liberation Serif', serif;color:#222;white-space:nowrap;">4.3</div>
<div class="t" style="position:absolute;left:618.5px;top:481.82px;width:45.5px;height:13.54000000000002px;text-align:center;font:10.2px/13.54000000000002px 'Liberation Serif', serif;color:#222;white-space:nowrap;">8.7</div>
<div class="t" style="position:absolute;left:664px;top:481.82px;width:44.700000000000045px;height:13.54000000000002px;text-align:center;font:10.2px/13.54000000000002px 'Liberation Serif', serif;color:#222;white-space:nowrap;">8.4</div>
<div class="t" style="position:absolute;left:708.7px;top:481.82px;width:45.39999999999998px;height:13.54000000000002px;text-align:center;font:10.2px/13.54000000000002px 'Liberation Serif', serif;color:#222;white-space:nowrap;">36.25</div>
<div class="t" style="position:absolute;left:754.1px;top:481.82px;width:185.89999999999998px;height:13.54000000000002px;text-align:center;font:10.2px/13.54000000000002px 'Liberation Serif', serif;color:#222;white-space:nowrap;">18.125</div>
<div class="t" style="position:absolute;left:53.5px;top:496.06px;width:126.80000000000001px;height:13.54000000000002px;text-align:center;font:10px/13.54000000000002px 'Liberation Serif', serif;color:#2a2a2a;white-space:nowrap;letter-spacing:0.3px;">法学院</div>
<div class="t" style="position:absolute;left:180.3px;top:495.36px;width:145.09999999999997px;height:13.54000000000002px;text-align:center;font:10.2px/13.54000000000002px 'Liberation Serif', serif;color:#222;white-space:nowrap;">20.6160</div>
<div class="t" style="position:absolute;left:325.4px;top:495.36px;width:158.0px;height:13.54000000000002px;text-align:center;font:10.2px/13.54000000000002px 'Liberation Serif', serif;color:#222;white-space:nowrap;">23.8260</div>
<div class="t" style="position:absolute;left:483.4px;top:495.36px;width:45.10000000000002px;height:13.54000000000002px;text-align:center;font:10.2px/13.54000000000002px 'Liberation Serif', serif;color:#222;white-space:nowrap;">8.4</div>
<div class="t" style="position:absolute;left:528.5px;top:495.36px;width:45.0px;height:13.54000000000002px;text-align:center;font:10.2px/13.54000000000002px 'Liberation Serif', serif;color:#222;white-space:nowrap;">8.875</div>
<div class="t" style="position:absolute;left:573.5px;top:495.36px;width:45.0px;height:13.54000000000002px;text-align:center;font:10.2px/13.54000000000002px 'Liberation Serif', serif;color:#222;white-space:nowrap;">8</div>
<div class="t" style="position:absolute;left:618.5px;top:495.36px;width:45.5px;height:13.54000000000002px;text-align:center;font:10.2px/13.54000000000002px 'Liberation Serif', serif;color:#222;white-space:nowrap;">4.7</div>
<div class="t" style="position:absolute;left:664px;top:495.36px;width:44.700000000000045px;height:13.54000000000002px;text-align:center;font:10.2px/13.54000000000002px 'Liberation Serif', serif;color:#222;white-space:nowrap;">2.3</div>
<div class="t" style="position:absolute;left:708.7px;top:495.36px;width:45.39999999999998px;height:13.54000000000002px;text-align:center;font:10.2px/13.54000000000002px 'Liberation Serif', serif;color:#222;white-space:nowrap;">32.275</div>
<div class="t" style="position:absolute;left:754.1px;top:495.36px;width:185.89999999999998px;height:13.54000000000002px;text-align:center;font:10.2px/13.54000000000002px 'Liberation Serif', serif;color:#222;white-space:nowrap;">16.1375</div>
</div>
<div style="position:absolute;left:901px;top:239.5px;width:14px;height:263px;background:#f3f3f3;"></div>
<div style="position:absolute;left:903.5px;top:247.6px;width:9.5px;height:255px;background:#e9e9e9;"></div>
<div style="position:absolute;left:901px;top:259.3px;width:1px;height:243px;background:#d8d8d8;"></div>
<div style="position:absolute;left:903.5px;top:247.6px;width:9.5px;height:10px;background:#fff;border:1px solid #cfcfcf;box-sizing:border-box;"></div>
<svg style="position:absolute;left:905.5px;top:251px;" width="6" height="3" viewBox="0 0 6 3"><path d="M0 3 L3 0 L6 3 Z" fill="#666"/></svg>
<div style="position:absolute;left:903.5px;top:257.3px;width:9.5px;height:146.4px;background:#fff;border:1px solid #cfcfcf;box-sizing:border-box;"></div>
<div style="position:absolute;left:903.5px;top:493.8px;width:9.5px;height:9px;background:#fff;border:1px solid #cfcfcf;box-sizing:border-box;"></div>
<svg style="position:absolute;left:905.5px;top:497px;" width="6" height="3" viewBox="0 0 6 3"><path d="M0 0 L6 0 L3 3 Z" fill="#666"/></svg>
<div style="position:absolute;left:35px;top:502.4px;width:880px;height:18.6px;background:#f5f5f5;"></div>
<div style="position:absolute;left:35px;top:502.4px;width:880px;height:1px;background:#e3e3e3;"></div>
<svg style="position:absolute;left:52.5px;top:508.5px;" width="4" height="6" viewBox="0 0 4 6"><path d="M3.5 0 L0 3 L3.5 6 Z" fill="#d0d0d0"/></svg>
<svg style="position:absolute;left:70.5px;top:508.5px;" width="4" height="6" viewBox="0 0 4 6"><path d="M0 0 L3.5 3 L0 6 Z" fill="#d0d0d0"/></svg>
<div style="position:absolute;left:100px;top:502.4px;width:40.3px;height:17px;background:#fff;"></div>
<div style="position:absolute;left:100px;top:517px;width:40.8px;height:1.5px;background:#3b8a62;"></div>
<div class="t" style="position:absolute;left:107.2px;top:506px;font:8.5px/9px 'Liberation Sans', sans-serif;color:#3f8f6a;white-space:nowrap;">总排名</div>
<div class="t" style="position:absolute;left:147.7px;top:506px;font:8.5px/9px 'Liberation Sans', sans-serif;color:#555;white-space:nowrap;">办公室</div>
<div class="t" style="position:absolute;left:188px;top:506px;font:8.5px/9px 'Liberation Sans', sans-serif;color:#555;white-space:nowrap;">新媒体</div>
<div class="t" style="position:absolute;left:228.8px;top:506px;font:8.5px/9px 'Liberation Sans', sans-serif;color:#555;white-space:nowrap;">文体</div>
<div class="t" style="position:absolute;left:260.8px;top:506px;font:8.5px/9px 'Liberation Sans', sans-serif;color:#555;white-space:nowrap;">学发</div>
<div class="t" style="position:absolute;left:293px;top:506px;font:8.5px/9px 'Liberation Sans', sans-serif;color:#555;white-space:nowrap;">生活权益</div>
<div style="position:absolute;left:180px;top:506px;width:1px;height:9px;background:#cfcfcf;"></div>
<div style="position:absolute;left:221px;top:506px;width:1px;height:9px;background:#cfcfcf;"></div>
<div style="position:absolute;left:253px;top:506px;width:1px;height:9px;background:#cfcfcf;"></div>
<div style="position:absolute;left:285.4px;top:506px;width:1px;height:9px;background:#cfcfcf;"></div>
<div style="position:absolute;left:334.7px;top:506px;width:1px;height:9px;background:#cfcfcf;"></div>
<svg style="position:absolute;left:355px;top:504.5px;" width="12" height="12" viewBox="0 0 12 12"><circle cx="6" cy="6" r="5.2" fill="none" stroke="#777"/><path d="M6 3 V9 M3 6 H9" stroke="#777"/></svg>
<svg style="position:absolute;left:561.5px;top:507px;" width="3" height="9" viewBox="0 0 3 9"><circle cx="1.5" cy="1" r="0.6" fill="#aaa"/><circle cx="1.5" cy="4.5" r="0.6" fill="#aaa"/><circle cx="1.5" cy="8" r="0.6" fill="#aaa"/></svg>
<div style="position:absolute;left:573.3px;top:507.4px;width:328px;height:8.8px;background:#fff;border:1px solid #d8d8d8;box-sizing:border-box;"></div>
<div style="position:absolute;left:573.3px;top:507.4px;width:9.5px;height:8.8px;background:#fff;border:1px solid #cfcfcf;box-sizing:border-box;"></div>
<svg style="position:absolute;left:576px;top:509.5px;" width="3" height="5" viewBox="0 0 3 5"><path d="M3 0 L0 2.5 L3 5 Z" fill="#666"/></svg>
<div style="position:absolute;left:582.5px;top:507.4px;width:257.3px;height:8.8px;background:#fff;border:1px solid #cfcfcf;box-sizing:border-box;"></div>
<div style="position:absolute;left:839.8px;top:508.4px;width:51.7px;height:6.8px;background:#ececec;"></div>
<div style="position:absolute;left:891.5px;top:507.4px;width:9.5px;height:8.8px;background:#fff;border:1px solid #cfcfcf;box-sizing:border-box;"></div>
<svg style="position:absolute;left:895px;top:509.5px;" width="3" height="5" viewBox="0 0 3 5"><path d="M0 0 L3 2.5 L0 5 Z" fill="#666"/></svg>
<div style="position:absolute;left:35px;top:521px;width:880px;height:14px;background:#fcfcfc;"></div>
<div class="t" style="position:absolute;left:39.7px;top:523.5px;font:7.5px/8px 'Liberation Sans', sans-serif;color:#555;white-space:nowrap;">就绪</div>
<svg style="position:absolute;left:67px;top:523px;" width="10" height="9" viewBox="0 0 10 9"><circle cx="5" cy="2" r="1.5" fill="none" stroke="#666"/><path d="M1 4 H9 M5 4 V6 L2.5 9 M5 6 L7.5 9" fill="none" stroke="#666"/></svg>
<div class="t" style="position:absolute;left:79.5px;top:523.5px;font:7.5px/8px 'Liberation Sans', sans-serif;color:#555;white-space:nowrap;">辅助功能: 调查</div>
<div style="position:absolute;left:718.3px;top:520.3px;width:25.4px;height:13.5px;background:#dcdcdc;"></div>
<svg style="position:absolute;left:725.5px;top:522.5px;" width="10" height="9" viewBox="0 0 10 9"><rect x="0.5" y="0.5" width="9" height="8" fill="none" stroke="#555"/><path d="M3.5 0.5 V8.5 M6.5 0.5 V8.5 M0.5 3 H9.5 M0.5 5.8 H9.5" stroke="#555"/></svg>
<svg style="position:absolute;left:751.8px;top:522.5px;" width="10" height="9" viewBox="0 0 10 9"><rect x="0.5" y="0.5" width="9" height="8" fill="none" stroke="#666"/><rect x="2.5" y="2.5" width="5" height="4" fill="none" stroke="#666"/></svg>
<svg style="position:absolute;left:777.7px;top:522.5px;" width="10" height="9" viewBox="0 0 10 9"><path d="M0.5 8.5 V0.5 H9.5 V8.5 M0.5 5.5 H5.5 V0.5" fill="none" stroke="#666"/></svg>
<div style="position:absolute;left:800px;top:527px;width:5px;height:1px;background:#777;"></div>
<div style="position:absolute;left:808px;top:527px;width:64px;height:1px;background:#888;"></div>
<div style="position:absolute;left:838.5px;top:523.5px;width:3.5px;height:8px;background:#555;"></div>
<svg style="position:absolute;left:875px;top:524.5px;" width="6" height="6" viewBox="0 0 6 6"><path d="M3 0 V6 M0 3 H6" stroke="#777"/></svg>
<div class="t" style="position:absolute;left:888.8px;top:523.5px;font:7.5px/8px 'Liberation Sans', sans-serif;color:#555;white-space:nowrap;">100%</div>
<div style="position:absolute;left:7.5px;top:564.7px;width:798.5px;height:2.5px;background:#08a0f2;"></div>
<div style="position:absolute;left:806px;top:564.8px;width:11px;height:2.2px;background:#5d6b7e;"></div>
<div style="position:absolute;left:817px;top:564.8px;width:125px;height:2.2px;background:#3d434d;"></div>
<div style="position:absolute;left:802.3px;top:562.3px;width:7.2px;height:7.2px;border-radius:50%;background:#fff;"></div>
<div style="position:absolute;left:6px;top:568px;width:24px;height:24px;border-radius:50%;background:radial-gradient(circle, rgba(255,255,255,0.2) 0%, rgba(255,255,255,0.06) 40%, rgba(255,255,255,0) 62%);"></div>
<svg style="position:absolute;left:14.8px;top:576px;" width="8" height="9" viewBox="0 0 8 9"><path d="M0.5 0 L7.8 4.5 L0.5 9 Z" fill="#fff"/></svg>
<svg style="position:absolute;left:46px;top:574px;" width="14" height="12" viewBox="0 0 14 12"><path d="M0.5 4 H3.5 L7.5 0.5 V11.5 L3.5 8 H0.5 Z" fill="#fff"/><path d="M9 3 Q11 6 9 9" fill="none" stroke="#fff" stroke-width="1.4"/><path d="M11 1 Q14.5 6 11 11" fill="none" stroke="#fff" stroke-width="1.4"/></svg>
<div class="t" style="position:absolute;left:80.5px;top:575.8px;font:8.8px/10px 'Liberation Sans', sans-serif;color:#fff;white-space:nowrap;font-weight:bold;">1:05:15 / 1:16:25</div>
<div class="t" style="position:absolute;left:891.5px;top:575.5px;font:10px/10px 'Liberation Sans', sans-serif;color:#fff;white-space:nowrap;">1x</div>
<svg style="position:absolute;left:927px;top:576px;" width="11" height="9" viewBox="0 0 11 9"><path d="M3.5 0 V3.2 H0 M7.5 0 V3.2 H11 M3.5 9 V5.8 H0 M7.5 9 V5.8 H11" fill="none" stroke="#fff" stroke-width="1.5"/></svg>
</body></html>
